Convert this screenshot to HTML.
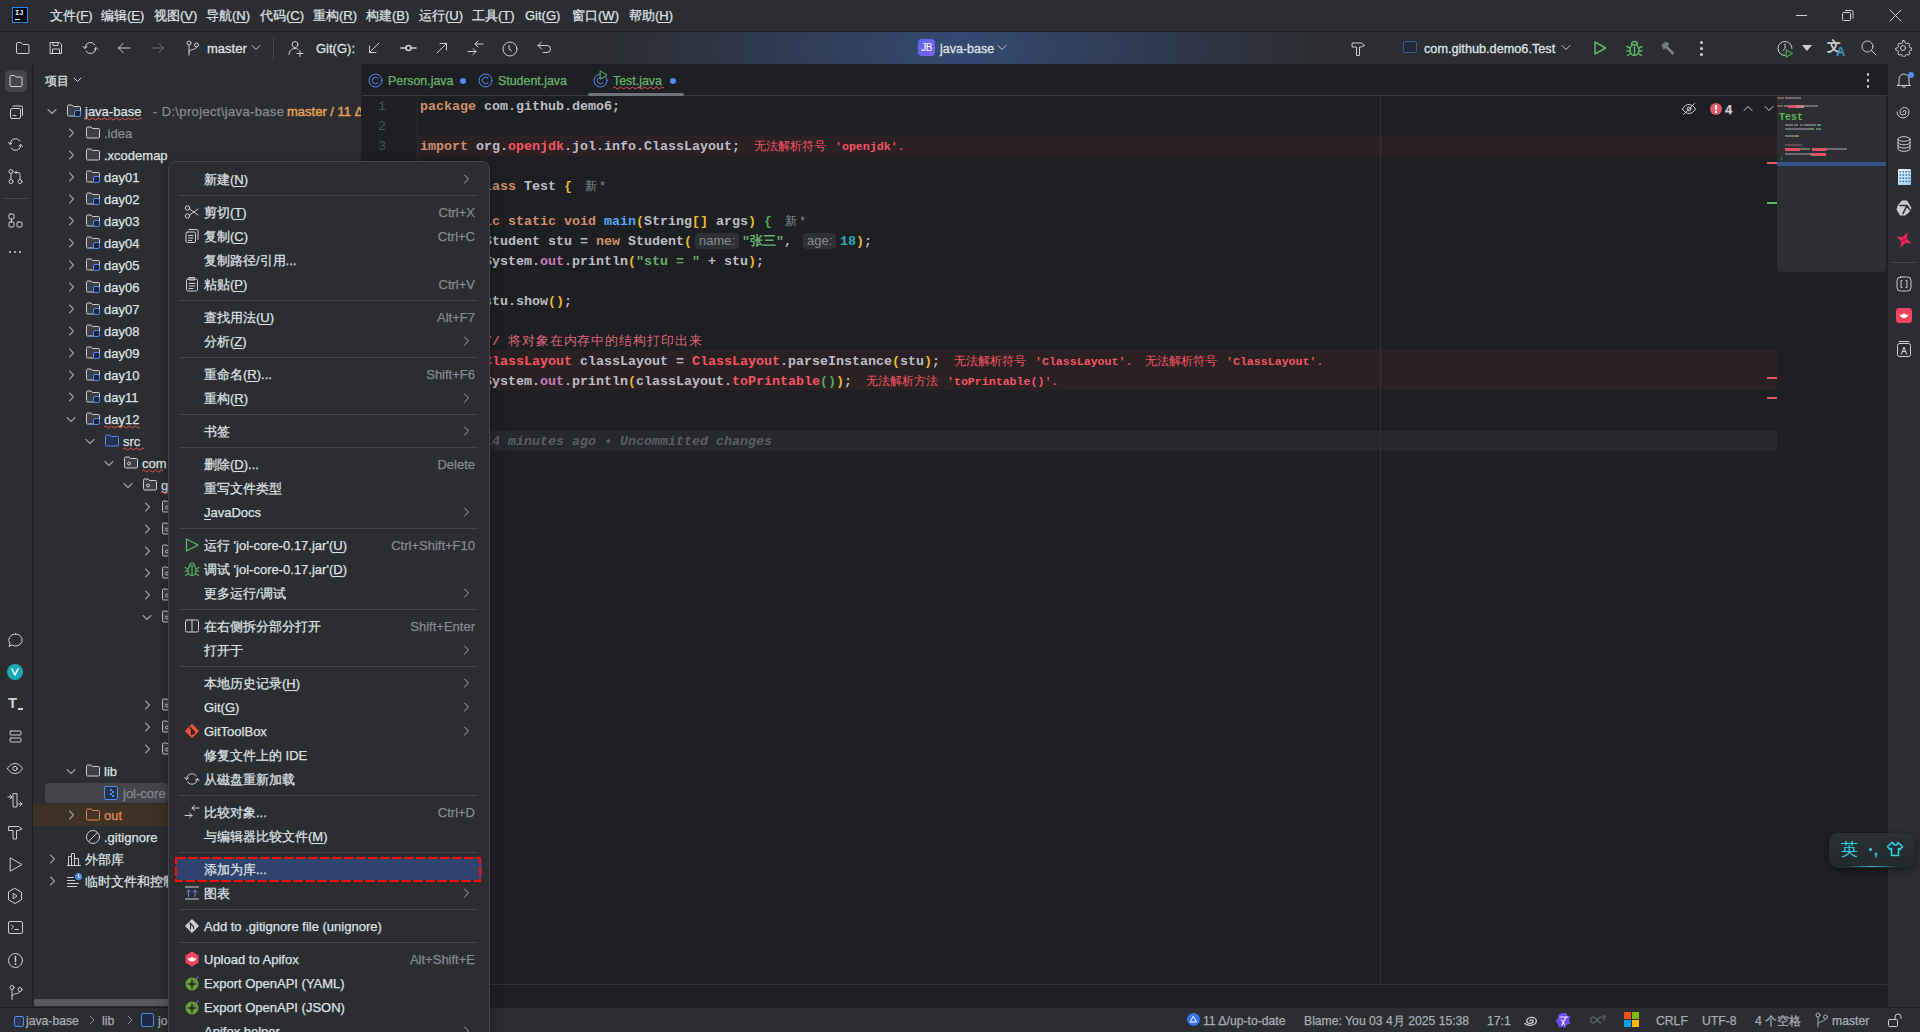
<!DOCTYPE html><html><head><meta charset="utf-8"><style>
html,body{margin:0;padding:0;width:1920px;height:1032px;overflow:hidden;background:#1E1F22}
body{position:relative;font-family:"Liberation Sans",sans-serif;font-size:13px;color:#DFE1E5}
.t{position:absolute;height:20px;line-height:20px;white-space:nowrap;-webkit-text-stroke:.25px}
.m{position:absolute;height:20px;line-height:20px;white-space:pre;font-family:"Liberation Mono",monospace;font-size:13.33px;font-weight:bold}
u{text-decoration:none;border-bottom:1px solid currentColor;line-height:13px;display:inline-block}
</style></head><body>
<div style="position:absolute;left:0px;top:0px;width:1920px;height:31px;background:#2B2D30"></div>
<div style="position:absolute;left:0px;top:31px;width:1920px;height:1px;background:#1E1F22"></div>
<div style="position:absolute;left:0px;top:32px;width:1920px;height:32px;background:#2B2D30"></div>
<div style="position:absolute;left:620px;top:32px;width:720px;height:32px;background:radial-gradient(ellipse 360px 120px at 340px 16px, rgba(56,84,140,0.75), rgba(56,84,140,0) 100%)"></div>
<div style="position:absolute;left:0px;top:64px;width:32px;height:944px;background:#2B2D30"></div>
<div style="position:absolute;left:32px;top:64px;width:1px;height:944px;background:#1E1F22"></div>
<div style="position:absolute;left:33px;top:64px;width:328px;height:944px;background:#2B2D30"></div>
<div style="position:absolute;left:361px;top:64px;width:1px;height:944px;background:#1E1F22"></div>
<div style="position:absolute;left:362px;top:64px;width:1525px;height:944px;background:#1E1F22"></div>
<div style="position:absolute;left:1887px;top:64px;width:1px;height:944px;background:#1E1F22"></div>
<div style="position:absolute;left:1888px;top:64px;width:32px;height:944px;background:#2B2D30"></div>
<div style="position:absolute;left:0px;top:1008px;width:1920px;height:24px;background:#2B2D30"></div>
<div style="position:absolute;left:0px;top:1007px;width:1920px;height:1px;background:#1E1F22"></div>
<div style="position:absolute;left:12px;top:7px;width:16px;height:16px;background:#000;border:1px solid #1F8BFF;box-sizing:border-box"></div>
<div style="position:absolute;left:15px;top:9px;font:bold 7px 'Liberation Mono',monospace;color:#fff;line-height:8px">IJ</div>
<div style="position:absolute;left:15px;top:19px;width:5px;height:1px;background:#fff"></div>
<div class="t" style="left:50px;top:6px;">文件(<u>F</u>)</div>
<div class="t" style="left:101px;top:6px;">编辑(<u>E</u>)</div>
<div class="t" style="left:154px;top:6px;">视图(<u>V</u>)</div>
<div class="t" style="left:206px;top:6px;">导航(<u>N</u>)</div>
<div class="t" style="left:260px;top:6px;">代码(<u>C</u>)</div>
<div class="t" style="left:313px;top:6px;">重构(<u>R</u>)</div>
<div class="t" style="left:366px;top:6px;">构建(<u>B</u>)</div>
<div class="t" style="left:419px;top:6px;">运行(<u>U</u>)</div>
<div class="t" style="left:472px;top:6px;">工具(<u>T</u>)</div>
<div class="t" style="left:525px;top:6px;">Git(<u>G</u>)</div>
<div class="t" style="left:572px;top:6px;">窗口(<u>W</u>)</div>
<div class="t" style="left:629px;top:6px;">帮助(<u>H</u>)</div>
<div style="position:absolute;left:1796px;top:15px;width:11px;height:1px;background:#CED0D6"></div>
<svg style="position:absolute;left:1842px;top:9px;" width="12" height="12" viewBox="0 0 12 12" fill="none" stroke="#CED0D6" stroke-width="1" stroke-linecap="round" stroke-linejoin="round"><rect x="0.5" y="3.5" width="8" height="8" rx="1"/><path d="M3.5 1.5 h6 a1.5 1.5 0 0 1 1.5 1.5 v6"/></svg>
<svg style="position:absolute;left:1889px;top:9px;" width="13" height="13" viewBox="0 0 13 13" fill="none" stroke="#CED0D6" stroke-width="1" stroke-linecap="round" stroke-linejoin="round"><path d="M1 1 L12 12 M12 1 L1 12"/></svg>
<div class="t" style="left:45px;top:71px;font-size:12px">项目</div>
<svg style="position:absolute;left:73px;top:76px;" width="9" height="8" viewBox="0 0 9 8" fill="none" stroke="#CED0D6" stroke-width="1" stroke-linecap="round" stroke-linejoin="round"><path d="M1 2 L4.5 5.5 L8 2"/></svg>
<svg style="position:absolute;left:15px;top:41px;" width="15" height="14" viewBox="0 0 15 14" fill="none" stroke="#CED0D6" stroke-width="1" stroke-linecap="round" stroke-linejoin="round"><path d="M1.5 2.5 a1 1 0 0 1 1-1 h3.5 l2 2 h5 a1 1 0 0 1 1 1 v7 a1 1 0 0 1 -1 1 h-10.5 a1 1 0 0 1 -1-1 z"/></svg>
<svg style="position:absolute;left:49px;top:41px;" width="14" height="14" viewBox="0 0 14 14" fill="none" stroke="#CED0D6" stroke-width="1" stroke-linecap="round" stroke-linejoin="round"><path d="M1.5 1.5 h9 l2 2 v9 h-11 z"/><path d="M4 1.5 v3 h5 v-3"/><path d="M3.5 12.5 v-4.5 h7 v4.5"/></svg>
<svg style="position:absolute;left:82px;top:40px;" width="17" height="16" viewBox="0 0 17 16" fill="none" stroke="#CED0D6" stroke-width="1" stroke-linecap="round" stroke-linejoin="round"><path d="M3 8 a5.5 5.5 0 0 1 10 -3.2"/><path d="M14 8 a5.5 5.5 0 0 1 -10 3.2"/><path d="M1 6.5 l2 2 l2 -2"/><path d="M12 9.5 l2 -2 l2 2"/></svg>
<svg style="position:absolute;left:117px;top:42px;" width="14" height="12" viewBox="0 0 14 12" fill="none" stroke="#CED0D6" stroke-width="1" stroke-linecap="round" stroke-linejoin="round"><path d="M13 6 h-11.5 M6 1.5 l-4.5 4.5 l4.5 4.5"/></svg>
<svg style="position:absolute;left:151px;top:42px;opacity:.45" width="14" height="12" viewBox="0 0 14 12" fill="none" stroke="#CED0D6" stroke-width="1" stroke-linecap="round" stroke-linejoin="round"><path d="M1 6 h11.5 M8 1.5 l4.5 4.5 l-4.5 4.5"/></svg>
<svg style="position:absolute;left:186px;top:40px;" width="13" height="16" viewBox="0 0 13 16" fill="none" stroke="#CED0D6" stroke-width="1" stroke-linecap="round" stroke-linejoin="round"><circle cx="3" cy="3" r="2"/><circle cx="10.5" cy="5" r="2"/><path d="M3 5 v10 M3 12 c0-3 7.5-2 7.5-5"/></svg>
<div class="t" style="left:207px;top:39px;-webkit-text-stroke:.3px">master</div>
<svg style="position:absolute;left:251px;top:44px;" width="10" height="7" viewBox="0 0 10 7" fill="none" stroke="#CED0D6" stroke-width="1" stroke-linecap="round" stroke-linejoin="round"><path d="M1 1.5 L5 5.5 L9 1.5"/></svg>
<div style="position:absolute;left:273px;top:37px;width:1px;height:23px;background:#43454A"></div>
<svg style="position:absolute;left:287px;top:40px;" width="17" height="17" viewBox="0 0 17 17" fill="none" stroke="#CED0D6" stroke-width="1" stroke-linecap="round" stroke-linejoin="round"><circle cx="8" cy="4.5" r="3"/><path d="M2 14.5 c0-4 3-6 6-6 c1 0 2 .2 3 .8"/><path d="M13 10.5 v6 M10 13.5 h6"/></svg>
<div class="t" style="left:316px;top:39px;-webkit-text-stroke:.3px">Git(G):</div>
<svg style="position:absolute;left:368px;top:42px;" width="12" height="12" viewBox="0 0 12 12" fill="none" stroke="#CED0D6" stroke-width="1" stroke-linecap="round" stroke-linejoin="round"><path d="M11 1 L1.5 10.5 M1.5 4 v6.5 h6.5"/></svg>
<svg style="position:absolute;left:400px;top:42px;stroke-width:1.6" width="17" height="12" viewBox="0 0 17 12" fill="none" stroke="#CED0D6" stroke-width="1" stroke-linecap="round" stroke-linejoin="round"><circle cx="8.5" cy="6" r="2.5"/><path d="M1 6 h5 M11 6 h5"/></svg>
<svg style="position:absolute;left:436px;top:42px;" width="12" height="12" viewBox="0 0 12 12" fill="none" stroke="#CED0D6" stroke-width="1" stroke-linecap="round" stroke-linejoin="round"><path d="M1 11 L10.5 1.5 M4 1.5 h6.5 v6.5"/></svg>
<svg style="position:absolute;left:467px;top:40px;" width="17" height="16" viewBox="0 0 17 16" fill="none" stroke="#CED0D6" stroke-width="1" stroke-linecap="round" stroke-linejoin="round"><path d="M16 4 h-8 M11 1 l-3 3 l3 3"/><path d="M1 11.5 h8 M6 8.5 l3 3 l-3 3"/></svg>
<svg style="position:absolute;left:502px;top:41px;" width="16" height="16" viewBox="0 0 16 16" fill="none" stroke="#CED0D6" stroke-width="1" stroke-linecap="round" stroke-linejoin="round"><circle cx="8" cy="8" r="7"/><path d="M7 4.5 v3.5 l2.5 2"/></svg>
<svg style="position:absolute;left:537px;top:41px;" width="15" height="14" viewBox="0 0 15 14" fill="none" stroke="#CED0D6" stroke-width="1" stroke-linecap="round" stroke-linejoin="round"><path d="M4.5 1 l-3.5 3.5 l3.5 3.5"/><path d="M1 4.5 h9 a3.5 3.5 0 0 1 0 7 h-4"/></svg>
<div style="position:absolute;left:918px;top:39px;width:17px;height:17px;border-radius:4px;background:linear-gradient(135deg,#5B6EF0,#7B5CE8);color:#fff;font:10px 'Liberation Sans',sans-serif;line-height:17px;text-align:center;letter-spacing:-.5px">JB</div>
<div class="t" style="left:940px;top:39px;-webkit-text-stroke:.3px;font-size:12.5px">java-base</div>
<svg style="position:absolute;left:997px;top:44px;" width="10" height="7" viewBox="0 0 10 7" fill="none" stroke="#CED0D6" stroke-width="1" stroke-linecap="round" stroke-linejoin="round"><path d="M1 1.5 L5 5.5 L9 1.5"/></svg>
<svg style="position:absolute;left:1351px;top:41px;" width="15" height="15" viewBox="0 0 15 15" fill="none" stroke="#CED0D6" stroke-width="1" stroke-linecap="round" stroke-linejoin="round"><path d="M1.5 2 h9 l3 2.5 l-3 1.5 h-2 v8.5 h-3 v-8.5 h-4 z"/></svg>
<div style="position:absolute;left:1403px;top:41px;width:14px;height:12px;border:1px solid #3D5A8E;border-radius:2px;box-sizing:border-box;background:#22283A"></div>
<div class="t" style="left:1424px;top:39px;-webkit-text-stroke:.3px;font-size:12.7px">com.github.demo6.Test</div>
<svg style="position:absolute;left:1561px;top:44px;" width="10" height="7" viewBox="0 0 10 7" fill="none" stroke="#CED0D6" stroke-width="1" stroke-linecap="round" stroke-linejoin="round"><path d="M1 1.5 L5 5.5 L9 1.5"/></svg>
<svg style="position:absolute;left:1593px;top:40px;stroke:#5FB865;stroke-width:1.5" width="14" height="16" viewBox="0 0 14 16" fill="none" stroke="#CED0D6" stroke-width="1" stroke-linecap="round" stroke-linejoin="round"><path d="M2 2 L12.5 8 L2 14 Z"/></svg>
<svg style="position:absolute;left:1626px;top:40px;stroke:#5FB865;stroke-width:1.4" width="17" height="17" viewBox="0 0 17 17" fill="none" stroke="#CED0D6" stroke-width="1" stroke-linecap="round" stroke-linejoin="round"><ellipse cx="8.5" cy="10" rx="4.5" ry="5.5"/><path d="M5.5 4.5 a3 3 0 0 1 6 0"/><path d="M1 6.5 l3 1.5 M16 6.5 l-3 1.5 M1 11 h3 M13 11 h3 M1.5 15.5 l3-2 M15.5 15.5 l-3-2 M8.5 6 v9"/></svg>
<svg style="position:absolute;left:1660px;top:40px;stroke:#777A80;fill:#777A80" width="16" height="16" viewBox="0 0 16 16" fill="none" stroke="#CED0D6" stroke-width="1" stroke-linecap="round" stroke-linejoin="round"><path d="M2 5 l4-3 l3 2 l-2 2 l7 7 l-1.5 1.5 l-7-7 l-1.5 1.5 z"/></svg>
<div style="position:absolute;left:1700px;top:41px;width:3px;height:3px;background:#CED0D6;border-radius:2px"></div>
<div style="position:absolute;left:1700px;top:47px;width:3px;height:3px;background:#CED0D6;border-radius:2px"></div>
<div style="position:absolute;left:1700px;top:53px;width:3px;height:3px;background:#CED0D6;border-radius:2px"></div>
<svg style="position:absolute;left:1776px;top:40px;" width="18" height="18" viewBox="0 0 18 18" fill="none" stroke="#CED0D6" stroke-width="1" stroke-linecap="round" stroke-linejoin="round"><path d="M9 15.5 a7 7 0 1 1 7 -7"/><path d="M9 4 v4.5 l-2 2"/><path d="M10.5 10 l6 3.5 l-6 3.5 z" stroke="#5FB865" fill="#1f3a24"/></svg>
<svg style="position:absolute;left:1802px;top:45px;" width="10" height="6" viewBox="0 0 10 6" fill="none" stroke="#CED0D6" stroke-width="1" stroke-linecap="round" stroke-linejoin="round"><path d="M0 0 h10 l-5 6 z" fill="#CED0D6" stroke="none"/></svg>
<div style="position:absolute;left:1827px;top:38px;font:bold 14px 'Liberation Sans',sans-serif;color:#CED0D6;line-height:16px">文</div>
<div style="position:absolute;left:1836px;top:44px;font:bold 13px 'Liberation Sans',sans-serif;color:#3592C4;line-height:16px">A</div>
<svg style="position:absolute;left:1861px;top:40px;" width="16" height="16" viewBox="0 0 16 16" fill="none" stroke="#CED0D6" stroke-width="1" stroke-linecap="round" stroke-linejoin="round"><circle cx="6.5" cy="6.5" r="5.5"/><path d="M10.5 10.5 L15 15"/></svg>
<svg style="position:absolute;left:1894px;top:39px;" width="18" height="18" viewBox="0 0 18 18" fill="none" stroke="#CED0D6" stroke-width="1" stroke-linecap="round" stroke-linejoin="round"><path d="M9 1.5 l1.6 .3 .5 2 1.5.9 2-.6 1.1 1.2 -.6 2 .9 1.5 2 .5 v1.6 l-2 .5 -.9 1.5 .6 2 -1.1 1.2 -2-.6 -1.5.9 -.5 2 h-1.6 l-.5-2 -1.5-.9 -2 .6 -1.1-1.2 .6-2 -.9-1.5 -2-.5 v-1.6 l2-.5 .9-1.5 -.6-2 1.1-1.2 2 .6 1.5-.9 .5-2 z"/><circle cx="9" cy="9" r="2.5"/></svg>
<div style="position:absolute;left:5px;top:70px;width:22px;height:22px;background:#43454A;border-radius:5px"></div>
<svg style="position:absolute;left:8px;top:73px;" width="16" height="16" viewBox="0 0 16 16" fill="none" stroke="#CED0D6" stroke-width="1" stroke-linecap="round" stroke-linejoin="round"><path d="M2 3.5 a1 1 0 0 1 1-1 h3.5 l1.5 1.5 h5 a1 1 0 0 1 1 1 v7.5 a1 1 0 0 1 -1 1 h-10 a1 1 0 0 1 -1-1 z"/></svg>
<svg style="position:absolute;left:8px;top:104px;" width="16" height="16" viewBox="0 0 16 16" fill="none" stroke="#CED0D6" stroke-width="1" stroke-linecap="round" stroke-linejoin="round"><rect x="2.5" y="4.5" width="10" height="10" rx="1.5"/><path d="M5 2 h8 a1.5 1.5 0 0 1 1.5 1.5 v8"/><path d="M5 11.5 h3"/></svg>
<svg style="position:absolute;left:7px;top:136px;" width="17" height="17" viewBox="0 0 17 17" fill="none" stroke="#CED0D6" stroke-width="1" stroke-linecap="round" stroke-linejoin="round"><path d="M3 8 a5.5 5.5 0 0 1 10 -3"/><path d="M14 9 a5.5 5.5 0 0 1 -10 3"/><path d="M1.5 6.5 l1.5 2 l2 -1.5"/><path d="M15.5 10.5 l-1.5-2 l-2 1.5"/></svg>
<svg style="position:absolute;left:7px;top:168px;" width="17" height="17" viewBox="0 0 17 17" fill="none" stroke="#CED0D6" stroke-width="1" stroke-linecap="round" stroke-linejoin="round"><circle cx="4" cy="3.5" r="2"/><circle cx="13" cy="13.5" r="2"/><circle cx="4" cy="13.5" r="2"/><path d="M4 5.5 v6 M13 11.5 v-5 a2 2 0 0 0 -2-2 h-3 M9.5 3 l-1.5 1.5 l1.5 1.5"/></svg>
<div style="position:absolute;left:4px;top:198px;width:24px;height:1px;background:#43454A"></div>
<svg style="position:absolute;left:7px;top:212px;" width="17" height="17" viewBox="0 0 17 17" fill="none" stroke="#CED0D6" stroke-width="1" stroke-linecap="round" stroke-linejoin="round"><rect x="2" y="2" width="5" height="5" rx="1"/><rect x="2" y="10" width="5" height="5" rx="1"/><rect x="10" y="10" width="5" height="5" rx="1"/><path d="M4.5 7 v3"/></svg>
<div style="position:absolute;left:9px;top:251px;width:2px;height:2px;background:#CED0D6;border-radius:1px"></div>
<div style="position:absolute;left:14px;top:251px;width:2px;height:2px;background:#CED0D6;border-radius:1px"></div>
<div style="position:absolute;left:19px;top:251px;width:2px;height:2px;background:#CED0D6;border-radius:1px"></div>
<svg style="position:absolute;left:7px;top:632px;" width="17" height="17" viewBox="0 0 17 17" fill="none" stroke="#CED0D6" stroke-width="1" stroke-linecap="round" stroke-linejoin="round"><path d="M8.5 2 a6.5 6 0 1 1 -3.5 11 l-3 1.5 l1-3 a6.5 6 0 0 1 5.5 -9.5 z"/></svg>
<div style="position:absolute;left:7px;top:664px;width:16px;height:16px;border-radius:8px;background:#1BA9B8"></div>
<svg style="position:absolute;left:7px;top:664px;" width="16" height="16" viewBox="0 0 16 16" fill="none" stroke="#CED0D6" stroke-width="1" stroke-linecap="round" stroke-linejoin="round"><path d="M5 5 l3 6 l3-6" stroke="#fff" stroke-width="1.5"/></svg>
<div style="position:absolute;left:8px;top:695px;font:bold 15px 'Liberation Sans',sans-serif;color:#CED0D6;line-height:16px">T</div>
<div style="position:absolute;left:18px;top:708px;width:5px;height:2px;background:#CED0D6"></div>
<svg style="position:absolute;left:7px;top:728px;" width="17" height="17" viewBox="0 0 17 17" fill="none" stroke="#CED0D6" stroke-width="1" stroke-linecap="round" stroke-linejoin="round"><rect x="3" y="3" width="11" height="4" rx="1"/><rect x="3" y="10" width="11" height="4" rx="1"/></svg>
<svg style="position:absolute;left:6px;top:760px;" width="18" height="17" viewBox="0 0 18 17" fill="none" stroke="#CED0D6" stroke-width="1" stroke-linecap="round" stroke-linejoin="round"><path d="M1.5 8.5 c2-3.5 4.5-5 7.5-5 s5.5 1.5 7.5 5 c-2 3.5-4.5 5-7.5 5 s-5.5-1.5-7.5-5 z"/><circle cx="9" cy="8.5" r="2.2"/></svg>
<svg style="position:absolute;left:7px;top:792px;" width="17" height="17" viewBox="0 0 17 17" fill="none" stroke="#CED0D6" stroke-width="1" stroke-linecap="round" stroke-linejoin="round"><path d="M6 2 v13 h4 v-13 z"/><path d="M1 5 h4 M3 3 l2 2 l-2 2 M11 12 h4 M13 10 l2 2 l-2 2"/></svg>
<svg style="position:absolute;left:7px;top:824px;" width="17" height="17" viewBox="0 0 17 17" fill="none" stroke="#CED0D6" stroke-width="1" stroke-linecap="round" stroke-linejoin="round"><path d="M2 2.5 h9.5 l3.5 2.5 l-3.5 1.5 h-2 v8.5 h-3.5 v-8.5 h-4 z"/></svg>
<svg style="position:absolute;left:8px;top:856px;" width="16" height="17" viewBox="0 0 16 17" fill="none" stroke="#CED0D6" stroke-width="1" stroke-linecap="round" stroke-linejoin="round"><path d="M2.5 2 L14 8.5 L2.5 15 Z"/></svg>
<svg style="position:absolute;left:6px;top:887px;" width="18" height="18" viewBox="0 0 18 18" fill="none" stroke="#CED0D6" stroke-width="1" stroke-linecap="round" stroke-linejoin="round"><path d="M9 1.5 l6.5 3.75 v7.5 L9 16.5 l-6.5-3.75 v-7.5 z"/><path d="M7.5 6.5 l3.5 2.5 l-3.5 2.5 z"/></svg>
<svg style="position:absolute;left:7px;top:920px;" width="17" height="16" viewBox="0 0 17 16" fill="none" stroke="#CED0D6" stroke-width="1" stroke-linecap="round" stroke-linejoin="round"><rect x="1.5" y="1.5" width="14" height="12" rx="1.5"/><path d="M4.5 5 l2 2 l-2 2 M8 9.5 h3.5"/></svg>
<svg style="position:absolute;left:7px;top:952px;" width="17" height="17" viewBox="0 0 17 17" fill="none" stroke="#CED0D6" stroke-width="1" stroke-linecap="round" stroke-linejoin="round"><circle cx="8.5" cy="8.5" r="7"/><path d="M8.5 4.5 v5" stroke-width="1.5"/><circle cx="8.5" cy="12" r=".4" stroke-width="1.2"/></svg>
<svg style="position:absolute;left:8px;top:984px;" width="16" height="17" viewBox="0 0 16 17" fill="none" stroke="#CED0D6" stroke-width="1" stroke-linecap="round" stroke-linejoin="round"><circle cx="4" cy="3.5" r="2"/><circle cx="12" cy="5.5" r="2"/><path d="M4 5.5 v10 M4 12 c0-3 8-1.5 8-4.5"/></svg>
<svg style="position:absolute;left:1895px;top:71px;" width="18" height="18" viewBox="0 0 18 18" fill="none" stroke="#CED0D6" stroke-width="1" stroke-linecap="round" stroke-linejoin="round"><path d="M4 13 v-5 a5 5 0 0 1 10 0 v5 l1.5 1.5 h-13 z"/><path d="M7.5 16 h3"/></svg>
<div style="position:absolute;left:1908px;top:72px;width:6px;height:6px;border-radius:3px;background:#548AF7"></div>
<svg style="position:absolute;left:1895px;top:103px;" width="18" height="18" viewBox="0 0 18 18" fill="none" stroke="#CED0D6" stroke-width="1" stroke-linecap="round" stroke-linejoin="round"><path d="M9 9 m-1 0 a1.5 1.5 0 0 1 3 0 a3 3 0 0 1 -6 0 a4.5 4.5 0 0 1 9 0 a6 6 0 0 1 -12 0"/></svg>
<svg style="position:absolute;left:1895px;top:135px;" width="18" height="18" viewBox="0 0 18 18" fill="none" stroke="#CED0D6" stroke-width="1" stroke-linecap="round" stroke-linejoin="round"><ellipse cx="9" cy="4" rx="6" ry="2.3"/><path d="M3 4 v10 a6 2.3 0 0 0 12 0 v-10 M3 7.5 a6 2.3 0 0 0 12 0 M3 10.8 a6 2.3 0 0 0 12 0"/></svg>
<div style="position:absolute;left:1898px;top:169px;width:13px;height:16px;background:linear-gradient(135deg,#F2F8FD,#9FCDEE);border-radius:1px"></div>
<svg style="position:absolute;left:1898px;top:169px" width="13" height="16"><g fill="#3A78B5"><rect x="1.5" y="2.0" width="1.6" height="1.6"/><rect x="4.5" y="2.0" width="1.6" height="1.6"/><rect x="7.5" y="2.0" width="1.6" height="1.6"/><rect x="10.5" y="2.0" width="1.6" height="1.6"/><rect x="1.5" y="5.2" width="1.6" height="1.6"/><rect x="4.5" y="5.2" width="1.6" height="1.6"/><rect x="7.5" y="5.2" width="1.6" height="1.6"/><rect x="10.5" y="5.2" width="1.6" height="1.6"/><rect x="1.5" y="8.4" width="1.6" height="1.6"/><rect x="4.5" y="8.4" width="1.6" height="1.6"/><rect x="7.5" y="8.4" width="1.6" height="1.6"/><rect x="10.5" y="8.4" width="1.6" height="1.6"/><rect x="1.5" y="11.600000000000001" width="1.6" height="1.6"/><rect x="4.5" y="11.600000000000001" width="1.6" height="1.6"/><rect x="7.5" y="11.600000000000001" width="1.6" height="1.6"/><rect x="10.5" y="11.600000000000001" width="1.6" height="1.6"/></g></svg>
<svg style="position:absolute;left:1895px;top:199px;" width="18" height="18" viewBox="0 0 18 18" fill="none" stroke="#CED0D6" stroke-width="1" stroke-linecap="round" stroke-linejoin="round"><path d="M7 1.5 h5 l4.5 7.5 l-2.5 4.5 l-4 3 h-5 l-3.5-6 l1.5-4.5 z" fill="#C9CBD0" stroke="none"/><path d="M5 6.5 h7 l-4 8 M12 6.5 l2.5 4" stroke="#2B2D30" stroke-width="1.6"/></svg>
<svg style="position:absolute;left:1895px;top:231px;" width="18" height="18" viewBox="0 0 18 18" fill="none" stroke="#CED0D6" stroke-width="1" stroke-linecap="round" stroke-linejoin="round"><path d="M9 0.5 L11.2 6.8 L17.5 9 L11.2 11.2 L9 17.5 L6.8 11.2 L0.5 9 L6.8 6.8 Z" fill="#E8265E" stroke="none" transform="rotate(25 9 9)"/><path d="M6 6 L12 12 M12 6 L6 12" stroke="#9E1640" stroke-width=".8" transform="rotate(25 9 9)"/></svg>
<div style="position:absolute;left:1892px;top:262px;width:24px;height:1px;background:#43454A"></div>
<svg style="position:absolute;left:1895px;top:275px;" width="18" height="18" viewBox="0 0 18 18" fill="none" stroke="#CED0D6" stroke-width="1" stroke-linecap="round" stroke-linejoin="round"><rect x="2" y="2" width="14" height="14" rx="3.5"/><path d="M7 5.5 h-1 v7 h1 M11 5.5 h1 v7 h-1"/></svg>
<div style="position:absolute;left:1896px;top:308px;width:16px;height:15px;border-radius:3px;background:#F0455E"></div>
<svg style="position:absolute;left:1896px;top:308px;" width="16" height="15" viewBox="0 0 16 15" fill="none" stroke="#CED0D6" stroke-width="1" stroke-linecap="round" stroke-linejoin="round"><path d="M4 6 a4 4 0 0 0 8 0 l-1.5 1 l-2.5-2 l-2.5 2 z" fill="#fff" stroke="none"/></svg>
<svg style="position:absolute;left:1895px;top:340px;" width="18" height="18" viewBox="0 0 18 18" fill="none" stroke="#CED0D6" stroke-width="1" stroke-linecap="round" stroke-linejoin="round"><rect x="2.5" y="3.5" width="13" height="13" rx="2"/><path d="M4 1.5 h10"/><path d="M6.5 14 l2.5-7 l2.5 7 M7.5 11.5 h3"/></svg>
<div style="position:absolute;left:14px;top:1016px;width:8px;height:9px;border:1px solid #548AF7;border-radius:2px;background:#2A3550"></div>
<div class="t" style="left:26px;top:1011px;color:#A8ADB5;font-size:12.2px">java-base</div>
<svg style="position:absolute;left:89px;top:1015px;stroke:#8B8E94" width="6" height="10" viewBox="0 0 6 10" fill="none" stroke="#CED0D6" stroke-width="1" stroke-linecap="round" stroke-linejoin="round"><path d="M1 1 l4 4 l-4 4"/></svg>
<div class="t" style="left:102px;top:1011px;color:#A8ADB5;font-size:12.2px">lib</div>
<svg style="position:absolute;left:127px;top:1015px;stroke:#8B8E94" width="6" height="10" viewBox="0 0 6 10" fill="none" stroke="#CED0D6" stroke-width="1" stroke-linecap="round" stroke-linejoin="round"><path d="M1 1 l4 4 l-4 4"/></svg>
<div style="position:absolute;left:141px;top:1013px;width:11px;height:12px;border:1px solid #548AF7;border-radius:2px;background:#1E2A44"></div>
<div class="t" style="left:158px;top:1011px;color:#A8ADB5;font-size:12.2px">jo</div>
<div style="position:absolute;left:1187px;top:1013px;width:13px;height:13px;border-radius:7px;background:#3574F0"></div>
<svg style="position:absolute;left:1187px;top:1013px;" width="13" height="13" viewBox="0 0 13 13" fill="none" stroke="#CED0D6" stroke-width="1" stroke-linecap="round" stroke-linejoin="round"><path d="M6.5 3.5 l3 5.5 h-6 z" stroke="#fff"/></svg>
<div class="t" style="left:1203px;top:1011px;color:#A8ADB5;font-size:12.2px">11 Δ/up-to-date</div>
<div class="t" style="left:1304px;top:1011px;color:#A8ADB5;font-size:12.2px">Blame: You 03 4月 2025 15:38</div>
<div class="t" style="left:1487px;top:1011px;color:#A8ADB5;font-size:12.2px">17:1</div>
<svg style="position:absolute;left:1523px;top:1014px;stroke-width:1.3" width="16" height="14" viewBox="0 0 16 14" fill="none" stroke="#CED0D6" stroke-width="1" stroke-linecap="round" stroke-linejoin="round"><path d="M8 7 m-1 0 a1.6 1.2 0 0 1 3.2 0 a3.2 2.4 0 0 1 -6.4 0 a4.8 3.6 0 0 1 9.6 0 a6.4 4.8 0 0 1 -11.5 2.5"/></svg>
<svg style="position:absolute;left:1555px;top:1012px;" width="17" height="17" viewBox="0 0 17 17" fill="none" stroke="#CED0D6" stroke-width="1" stroke-linecap="round" stroke-linejoin="round"><path d="M7 1 h4 l1.5 3 h3 l-1.5 4 l1.5 4 l-3.5 .5 l-2 3.5 l-3-1 l-3.5 .5 l-.5-3.5 l-2.5-3 l2.5-3 l.5-3.5 z" fill="#6C4DF0" stroke="none"/><path d="M5 5 h7.5 M11 5 l-4 8 M6.5 8 l3 4.5" stroke="#F0ECFF" stroke-width="1.2"/></svg>
<svg style="position:absolute;left:1589px;top:1014px;stroke:#5A5D63;stroke-width:1.4" width="18" height="12" viewBox="0 0 18 12" fill="none" stroke="#CED0D6" stroke-width="1" stroke-linecap="round" stroke-linejoin="round"><path d="M4.5 3 a3 3 0 1 0 0 6 c2.5 0 4.5-6 7.5-6 a3 3 0 0 1 3 3 M4.5 3 c2.5 0 4.5 6 7.5 6"/><circle cx="15.5" cy="2.5" r=".8"/></svg>
<svg style="position:absolute;left:1624px;top:1012px" width="15" height="15"><rect x="0" y="0" width="7" height="7" fill="#F25022"/><rect x="8" y="0" width="7" height="7" fill="#7FBA00"/><rect x="0" y="8" width="7" height="7" fill="#00A4EF"/><rect x="8" y="8" width="7" height="7" fill="#FFB900"/></svg>
<div class="t" style="left:1656px;top:1011px;color:#A8ADB5;font-size:12.2px">CRLF</div>
<div class="t" style="left:1702px;top:1011px;color:#A8ADB5;font-size:12.2px">UTF-8</div>
<div class="t" style="left:1755px;top:1011px;color:#A8ADB5;font-size:12.2px">4 个空格</div>
<svg style="position:absolute;left:1815px;top:1012px;stroke:#A8ADB5" width="13" height="16" viewBox="0 0 13 16" fill="none" stroke="#CED0D6" stroke-width="1" stroke-linecap="round" stroke-linejoin="round"><circle cx="3" cy="3" r="2"/><circle cx="10.5" cy="5" r="2"/><path d="M3 5 v10 M3 12 c0-3 7.5-2 7.5-5"/></svg>
<div class="t" style="left:1832px;top:1011px;color:#A8ADB5;font-size:12.2px">master</div>
<svg style="position:absolute;left:1887px;top:1012px;" width="16" height="16" viewBox="0 0 16 16" fill="none" stroke="#CED0D6" stroke-width="1" stroke-linecap="round" stroke-linejoin="round"><rect x="1.5" y="7.5" width="9" height="7" rx="1"/><path d="M8 7.5 v-2.5 a3 3 0 0 1 6 0 v1.5"/></svg>
<svg style="position:absolute;left:47px;top:108px;stroke:#9A9DA3;stroke-width:1.15" width="10" height="7" viewBox="0 0 10 7" fill="none" stroke="#CED0D6" stroke-width="1" stroke-linecap="round" stroke-linejoin="round"><path d="M1 1.5 L5 5.5 L9 1.5"/></svg>
<svg style="position:absolute;left:66px;top:103px;" width="16" height="16" viewBox="0 0 16 16" fill="none" stroke="#CED0D6" stroke-width="1" stroke-linecap="round" stroke-linejoin="round"><path d="M1.5 3 a1 1 0 0 1 1-1 h3.5 l1.5 1.5 h6 a1 1 0 0 1 1 1 v7.5 a1 1 0 0 1 -1 1 h-11 a1 1 0 0 1 -1-1 z" fill="#3C3E43" stroke="#CED0D6"/></svg>
<div style="position:absolute;left:74px;top:110px;width:7px;height:7px;border:1.3px solid #548AF7;border-radius:2px;background:#1F2536;box-sizing:border-box"></div>
<div class="t" style="left:85px;top:102px;">java-base</div>
<svg style="position:absolute;left:85px;top:117px" width="58" height="4"><path d="M0 2 q1.5 -2 3 0 t3 0 t3 0 t3 0 t3 0 t3 0 t3 0 t3 0 t3 0 t3 0 t3 0 t3 0 t3 0 t3 0 t3 0 t3 0 t3 0 t3 0 t3 0" stroke="#E05555" fill="none" stroke-width="1"/></svg>
<div class="t" style="left:153px;top:102px;color:#868A91;letter-spacing:.35px">- D:\project\java-base</div>
<div class="t" style="left:287px;top:102px;color:#E3A15A;-webkit-text-stroke:.45px;width:74px;overflow:hidden">master / 11 Δ</div>
<div style="position:absolute;left:45px;top:783px;width:123px;height:20px;background:#43454A;border-radius:4px"></div>
<div style="position:absolute;left:33px;top:805px;width:135px;height:21px;background:#3D3223"></div>
<svg style="position:absolute;left:68px;top:128px;stroke:#9A9DA3;stroke-width:1.15" width="7" height="10" viewBox="0 0 7 10" fill="none" stroke="#CED0D6" stroke-width="1" stroke-linecap="round" stroke-linejoin="round"><path d="M1.5 1 L5.5 5 L1.5 9"/></svg>
<svg style="position:absolute;left:85px;top:125px;" width="16" height="16" viewBox="0 0 16 16" fill="none" stroke="#CED0D6" stroke-width="1" stroke-linecap="round" stroke-linejoin="round"><path d="M1.5 3 a1 1 0 0 1 1-1 h3.5 l1.5 1.5 h6 a1 1 0 0 1 1 1 v7.5 a1 1 0 0 1 -1 1 h-11 a1 1 0 0 1 -1-1 z" fill="#3C3E43" stroke="#CED0D6"/></svg>
<div class="t" style="left:104px;top:124px;color:#868A91">.idea</div>
<svg style="position:absolute;left:68px;top:150px;stroke:#9A9DA3;stroke-width:1.15" width="7" height="10" viewBox="0 0 7 10" fill="none" stroke="#CED0D6" stroke-width="1" stroke-linecap="round" stroke-linejoin="round"><path d="M1.5 1 L5.5 5 L1.5 9"/></svg>
<svg style="position:absolute;left:85px;top:147px;" width="16" height="16" viewBox="0 0 16 16" fill="none" stroke="#CED0D6" stroke-width="1" stroke-linecap="round" stroke-linejoin="round"><path d="M1.5 3 a1 1 0 0 1 1-1 h3.5 l1.5 1.5 h6 a1 1 0 0 1 1 1 v7.5 a1 1 0 0 1 -1 1 h-11 a1 1 0 0 1 -1-1 z" fill="#3C3E43" stroke="#CED0D6"/></svg>
<div class="t" style="left:104px;top:146px;color:#DFE1E5">.xcodemap</div>
<svg style="position:absolute;left:68px;top:172px;stroke:#9A9DA3;stroke-width:1.15" width="7" height="10" viewBox="0 0 7 10" fill="none" stroke="#CED0D6" stroke-width="1" stroke-linecap="round" stroke-linejoin="round"><path d="M1.5 1 L5.5 5 L1.5 9"/></svg>
<svg style="position:absolute;left:85px;top:169px;" width="16" height="16" viewBox="0 0 16 16" fill="none" stroke="#CED0D6" stroke-width="1" stroke-linecap="round" stroke-linejoin="round"><path d="M1.5 3 a1 1 0 0 1 1-1 h3.5 l1.5 1.5 h6 a1 1 0 0 1 1 1 v7.5 a1 1 0 0 1 -1 1 h-11 a1 1 0 0 1 -1-1 z" fill="#3C3E43" stroke="#CED0D6"/></svg>
<div style="position:absolute;left:93px;top:176px;width:7px;height:7px;border:1.3px solid #548AF7;border-radius:2px;background:#1F2536;box-sizing:border-box"></div>
<div class="t" style="left:104px;top:168px;color:#DFE1E5">day01</div>
<svg style="position:absolute;left:68px;top:194px;stroke:#9A9DA3;stroke-width:1.15" width="7" height="10" viewBox="0 0 7 10" fill="none" stroke="#CED0D6" stroke-width="1" stroke-linecap="round" stroke-linejoin="round"><path d="M1.5 1 L5.5 5 L1.5 9"/></svg>
<svg style="position:absolute;left:85px;top:191px;" width="16" height="16" viewBox="0 0 16 16" fill="none" stroke="#CED0D6" stroke-width="1" stroke-linecap="round" stroke-linejoin="round"><path d="M1.5 3 a1 1 0 0 1 1-1 h3.5 l1.5 1.5 h6 a1 1 0 0 1 1 1 v7.5 a1 1 0 0 1 -1 1 h-11 a1 1 0 0 1 -1-1 z" fill="#3C3E43" stroke="#CED0D6"/></svg>
<div style="position:absolute;left:93px;top:198px;width:7px;height:7px;border:1.3px solid #548AF7;border-radius:2px;background:#1F2536;box-sizing:border-box"></div>
<div class="t" style="left:104px;top:190px;color:#DFE1E5">day02</div>
<svg style="position:absolute;left:68px;top:216px;stroke:#9A9DA3;stroke-width:1.15" width="7" height="10" viewBox="0 0 7 10" fill="none" stroke="#CED0D6" stroke-width="1" stroke-linecap="round" stroke-linejoin="round"><path d="M1.5 1 L5.5 5 L1.5 9"/></svg>
<svg style="position:absolute;left:85px;top:213px;" width="16" height="16" viewBox="0 0 16 16" fill="none" stroke="#CED0D6" stroke-width="1" stroke-linecap="round" stroke-linejoin="round"><path d="M1.5 3 a1 1 0 0 1 1-1 h3.5 l1.5 1.5 h6 a1 1 0 0 1 1 1 v7.5 a1 1 0 0 1 -1 1 h-11 a1 1 0 0 1 -1-1 z" fill="#3C3E43" stroke="#CED0D6"/></svg>
<div style="position:absolute;left:93px;top:220px;width:7px;height:7px;border:1.3px solid #548AF7;border-radius:2px;background:#1F2536;box-sizing:border-box"></div>
<div class="t" style="left:104px;top:212px;color:#DFE1E5">day03</div>
<svg style="position:absolute;left:68px;top:238px;stroke:#9A9DA3;stroke-width:1.15" width="7" height="10" viewBox="0 0 7 10" fill="none" stroke="#CED0D6" stroke-width="1" stroke-linecap="round" stroke-linejoin="round"><path d="M1.5 1 L5.5 5 L1.5 9"/></svg>
<svg style="position:absolute;left:85px;top:235px;" width="16" height="16" viewBox="0 0 16 16" fill="none" stroke="#CED0D6" stroke-width="1" stroke-linecap="round" stroke-linejoin="round"><path d="M1.5 3 a1 1 0 0 1 1-1 h3.5 l1.5 1.5 h6 a1 1 0 0 1 1 1 v7.5 a1 1 0 0 1 -1 1 h-11 a1 1 0 0 1 -1-1 z" fill="#3C3E43" stroke="#CED0D6"/></svg>
<div style="position:absolute;left:93px;top:242px;width:7px;height:7px;border:1.3px solid #548AF7;border-radius:2px;background:#1F2536;box-sizing:border-box"></div>
<div class="t" style="left:104px;top:234px;color:#DFE1E5">day04</div>
<svg style="position:absolute;left:68px;top:260px;stroke:#9A9DA3;stroke-width:1.15" width="7" height="10" viewBox="0 0 7 10" fill="none" stroke="#CED0D6" stroke-width="1" stroke-linecap="round" stroke-linejoin="round"><path d="M1.5 1 L5.5 5 L1.5 9"/></svg>
<svg style="position:absolute;left:85px;top:257px;" width="16" height="16" viewBox="0 0 16 16" fill="none" stroke="#CED0D6" stroke-width="1" stroke-linecap="round" stroke-linejoin="round"><path d="M1.5 3 a1 1 0 0 1 1-1 h3.5 l1.5 1.5 h6 a1 1 0 0 1 1 1 v7.5 a1 1 0 0 1 -1 1 h-11 a1 1 0 0 1 -1-1 z" fill="#3C3E43" stroke="#CED0D6"/></svg>
<div style="position:absolute;left:93px;top:264px;width:7px;height:7px;border:1.3px solid #548AF7;border-radius:2px;background:#1F2536;box-sizing:border-box"></div>
<div class="t" style="left:104px;top:256px;color:#DFE1E5">day05</div>
<svg style="position:absolute;left:68px;top:282px;stroke:#9A9DA3;stroke-width:1.15" width="7" height="10" viewBox="0 0 7 10" fill="none" stroke="#CED0D6" stroke-width="1" stroke-linecap="round" stroke-linejoin="round"><path d="M1.5 1 L5.5 5 L1.5 9"/></svg>
<svg style="position:absolute;left:85px;top:279px;" width="16" height="16" viewBox="0 0 16 16" fill="none" stroke="#CED0D6" stroke-width="1" stroke-linecap="round" stroke-linejoin="round"><path d="M1.5 3 a1 1 0 0 1 1-1 h3.5 l1.5 1.5 h6 a1 1 0 0 1 1 1 v7.5 a1 1 0 0 1 -1 1 h-11 a1 1 0 0 1 -1-1 z" fill="#3C3E43" stroke="#CED0D6"/></svg>
<div style="position:absolute;left:93px;top:286px;width:7px;height:7px;border:1.3px solid #548AF7;border-radius:2px;background:#1F2536;box-sizing:border-box"></div>
<div class="t" style="left:104px;top:278px;color:#DFE1E5">day06</div>
<svg style="position:absolute;left:68px;top:304px;stroke:#9A9DA3;stroke-width:1.15" width="7" height="10" viewBox="0 0 7 10" fill="none" stroke="#CED0D6" stroke-width="1" stroke-linecap="round" stroke-linejoin="round"><path d="M1.5 1 L5.5 5 L1.5 9"/></svg>
<svg style="position:absolute;left:85px;top:301px;" width="16" height="16" viewBox="0 0 16 16" fill="none" stroke="#CED0D6" stroke-width="1" stroke-linecap="round" stroke-linejoin="round"><path d="M1.5 3 a1 1 0 0 1 1-1 h3.5 l1.5 1.5 h6 a1 1 0 0 1 1 1 v7.5 a1 1 0 0 1 -1 1 h-11 a1 1 0 0 1 -1-1 z" fill="#3C3E43" stroke="#CED0D6"/></svg>
<div style="position:absolute;left:93px;top:308px;width:7px;height:7px;border:1.3px solid #548AF7;border-radius:2px;background:#1F2536;box-sizing:border-box"></div>
<div class="t" style="left:104px;top:300px;color:#DFE1E5">day07</div>
<svg style="position:absolute;left:68px;top:326px;stroke:#9A9DA3;stroke-width:1.15" width="7" height="10" viewBox="0 0 7 10" fill="none" stroke="#CED0D6" stroke-width="1" stroke-linecap="round" stroke-linejoin="round"><path d="M1.5 1 L5.5 5 L1.5 9"/></svg>
<svg style="position:absolute;left:85px;top:323px;" width="16" height="16" viewBox="0 0 16 16" fill="none" stroke="#CED0D6" stroke-width="1" stroke-linecap="round" stroke-linejoin="round"><path d="M1.5 3 a1 1 0 0 1 1-1 h3.5 l1.5 1.5 h6 a1 1 0 0 1 1 1 v7.5 a1 1 0 0 1 -1 1 h-11 a1 1 0 0 1 -1-1 z" fill="#3C3E43" stroke="#CED0D6"/></svg>
<div style="position:absolute;left:93px;top:330px;width:7px;height:7px;border:1.3px solid #548AF7;border-radius:2px;background:#1F2536;box-sizing:border-box"></div>
<div class="t" style="left:104px;top:322px;color:#DFE1E5">day08</div>
<svg style="position:absolute;left:68px;top:348px;stroke:#9A9DA3;stroke-width:1.15" width="7" height="10" viewBox="0 0 7 10" fill="none" stroke="#CED0D6" stroke-width="1" stroke-linecap="round" stroke-linejoin="round"><path d="M1.5 1 L5.5 5 L1.5 9"/></svg>
<svg style="position:absolute;left:85px;top:345px;" width="16" height="16" viewBox="0 0 16 16" fill="none" stroke="#CED0D6" stroke-width="1" stroke-linecap="round" stroke-linejoin="round"><path d="M1.5 3 a1 1 0 0 1 1-1 h3.5 l1.5 1.5 h6 a1 1 0 0 1 1 1 v7.5 a1 1 0 0 1 -1 1 h-11 a1 1 0 0 1 -1-1 z" fill="#3C3E43" stroke="#CED0D6"/></svg>
<div style="position:absolute;left:93px;top:352px;width:7px;height:7px;border:1.3px solid #548AF7;border-radius:2px;background:#1F2536;box-sizing:border-box"></div>
<div class="t" style="left:104px;top:344px;color:#DFE1E5">day09</div>
<svg style="position:absolute;left:68px;top:370px;stroke:#9A9DA3;stroke-width:1.15" width="7" height="10" viewBox="0 0 7 10" fill="none" stroke="#CED0D6" stroke-width="1" stroke-linecap="round" stroke-linejoin="round"><path d="M1.5 1 L5.5 5 L1.5 9"/></svg>
<svg style="position:absolute;left:85px;top:367px;" width="16" height="16" viewBox="0 0 16 16" fill="none" stroke="#CED0D6" stroke-width="1" stroke-linecap="round" stroke-linejoin="round"><path d="M1.5 3 a1 1 0 0 1 1-1 h3.5 l1.5 1.5 h6 a1 1 0 0 1 1 1 v7.5 a1 1 0 0 1 -1 1 h-11 a1 1 0 0 1 -1-1 z" fill="#3C3E43" stroke="#CED0D6"/></svg>
<div style="position:absolute;left:93px;top:374px;width:7px;height:7px;border:1.3px solid #548AF7;border-radius:2px;background:#1F2536;box-sizing:border-box"></div>
<div class="t" style="left:104px;top:366px;color:#DFE1E5">day10</div>
<svg style="position:absolute;left:68px;top:392px;stroke:#9A9DA3;stroke-width:1.15" width="7" height="10" viewBox="0 0 7 10" fill="none" stroke="#CED0D6" stroke-width="1" stroke-linecap="round" stroke-linejoin="round"><path d="M1.5 1 L5.5 5 L1.5 9"/></svg>
<svg style="position:absolute;left:85px;top:389px;" width="16" height="16" viewBox="0 0 16 16" fill="none" stroke="#CED0D6" stroke-width="1" stroke-linecap="round" stroke-linejoin="round"><path d="M1.5 3 a1 1 0 0 1 1-1 h3.5 l1.5 1.5 h6 a1 1 0 0 1 1 1 v7.5 a1 1 0 0 1 -1 1 h-11 a1 1 0 0 1 -1-1 z" fill="#3C3E43" stroke="#CED0D6"/></svg>
<div style="position:absolute;left:93px;top:396px;width:7px;height:7px;border:1.3px solid #548AF7;border-radius:2px;background:#1F2536;box-sizing:border-box"></div>
<div class="t" style="left:104px;top:388px;color:#DFE1E5">day11</div>
<svg style="position:absolute;left:66px;top:416px;stroke:#9A9DA3;stroke-width:1.15" width="10" height="7" viewBox="0 0 10 7" fill="none" stroke="#CED0D6" stroke-width="1" stroke-linecap="round" stroke-linejoin="round"><path d="M1 1.5 L5 5.5 L9 1.5"/></svg>
<svg style="position:absolute;left:85px;top:411px;" width="16" height="16" viewBox="0 0 16 16" fill="none" stroke="#CED0D6" stroke-width="1" stroke-linecap="round" stroke-linejoin="round"><path d="M1.5 3 a1 1 0 0 1 1-1 h3.5 l1.5 1.5 h6 a1 1 0 0 1 1 1 v7.5 a1 1 0 0 1 -1 1 h-11 a1 1 0 0 1 -1-1 z" fill="#3C3E43" stroke="#CED0D6"/></svg>
<div style="position:absolute;left:93px;top:418px;width:7px;height:7px;border:1.3px solid #548AF7;border-radius:2px;background:#1F2536;box-sizing:border-box"></div>
<div class="t" style="left:104px;top:410px;color:#DFE1E5">day12</div>
<svg style="position:absolute;left:104px;top:425px" width="36" height="4"><path d="M0 2 q1.5 -2 3 0 t3 0 t3 0 t3 0 t3 0 t3 0 t3 0 t3 0 t3 0 t3 0 t3 0 t3 0 t3 0" stroke="#E05555" fill="none" stroke-width="1"/></svg>
<svg style="position:absolute;left:85px;top:438px;stroke:#9A9DA3;stroke-width:1.15" width="10" height="7" viewBox="0 0 10 7" fill="none" stroke="#CED0D6" stroke-width="1" stroke-linecap="round" stroke-linejoin="round"><path d="M1 1.5 L5 5.5 L9 1.5"/></svg>
<svg style="position:absolute;left:104px;top:433px;" width="16" height="16" viewBox="0 0 16 16" fill="none" stroke="#CED0D6" stroke-width="1" stroke-linecap="round" stroke-linejoin="round"><path d="M1.5 3 a1 1 0 0 1 1-1 h3.5 l1.5 1.5 h6 a1 1 0 0 1 1 1 v7.5 a1 1 0 0 1 -1 1 h-11 a1 1 0 0 1 -1-1 z" fill="#25324D" stroke="#548AF7"/></svg>
<div class="t" style="left:123px;top:432px;color:#DFE1E5">src</div>
<svg style="position:absolute;left:123px;top:447px" width="21" height="4"><path d="M0 2 q1.5 -2 3 0 t3 0 t3 0 t3 0 t3 0 t3 0 t3 0 t3 0" stroke="#E05555" fill="none" stroke-width="1"/></svg>
<svg style="position:absolute;left:104px;top:460px;stroke:#9A9DA3;stroke-width:1.15" width="10" height="7" viewBox="0 0 10 7" fill="none" stroke="#CED0D6" stroke-width="1" stroke-linecap="round" stroke-linejoin="round"><path d="M1 1.5 L5 5.5 L9 1.5"/></svg>
<svg style="position:absolute;left:123px;top:455px;" width="16" height="16" viewBox="0 0 16 16" fill="none" stroke="#CED0D6" stroke-width="1" stroke-linecap="round" stroke-linejoin="round"><path d="M1.5 3 a1 1 0 0 1 1-1 h3.5 l1.5 1.5 h6 a1 1 0 0 1 1 1 v7.5 a1 1 0 0 1 -1 1 h-11 a1 1 0 0 1 -1-1 z" fill="#3C3E43" stroke="#CED0D6"/></svg>
<svg style="position:absolute;left:123px;top:455px;" width="16" height="16" viewBox="0 0 16 16" fill="none" stroke="#CED0D6" stroke-width="1" stroke-linecap="round" stroke-linejoin="round"><circle cx="6" cy="8.5" r="1.5"/></svg>
<div class="t" style="left:142px;top:454px;color:#DFE1E5">com</div>
<svg style="position:absolute;left:142px;top:469px" width="21" height="4"><path d="M0 2 q1.5 -2 3 0 t3 0 t3 0 t3 0 t3 0 t3 0 t3 0 t3 0" stroke="#E05555" fill="none" stroke-width="1"/></svg>
<svg style="position:absolute;left:123px;top:482px;stroke:#9A9DA3;stroke-width:1.15" width="10" height="7" viewBox="0 0 10 7" fill="none" stroke="#CED0D6" stroke-width="1" stroke-linecap="round" stroke-linejoin="round"><path d="M1 1.5 L5 5.5 L9 1.5"/></svg>
<svg style="position:absolute;left:142px;top:477px;" width="16" height="16" viewBox="0 0 16 16" fill="none" stroke="#CED0D6" stroke-width="1" stroke-linecap="round" stroke-linejoin="round"><path d="M1.5 3 a1 1 0 0 1 1-1 h3.5 l1.5 1.5 h6 a1 1 0 0 1 1 1 v7.5 a1 1 0 0 1 -1 1 h-11 a1 1 0 0 1 -1-1 z" fill="#3C3E43" stroke="#CED0D6"/></svg>
<svg style="position:absolute;left:142px;top:477px;" width="16" height="16" viewBox="0 0 16 16" fill="none" stroke="#CED0D6" stroke-width="1" stroke-linecap="round" stroke-linejoin="round"><circle cx="6" cy="8.5" r="1.5"/></svg>
<div class="t" style="left:161px;top:476px;color:#DFE1E5">g</div>
<svg style="position:absolute;left:161px;top:491px" width="7" height="4"><path d="M0 2 q1.5 -2 3 0 t3 0 t3 0" stroke="#E05555" fill="none" stroke-width="1"/></svg>
<svg style="position:absolute;left:144px;top:502px;stroke:#9A9DA3;stroke-width:1.15" width="7" height="10" viewBox="0 0 7 10" fill="none" stroke="#CED0D6" stroke-width="1" stroke-linecap="round" stroke-linejoin="round"><path d="M1.5 1 L5.5 5 L1.5 9"/></svg>
<svg style="position:absolute;left:161px;top:499px;" width="16" height="16" viewBox="0 0 16 16" fill="none" stroke="#CED0D6" stroke-width="1" stroke-linecap="round" stroke-linejoin="round"><path d="M1.5 3 a1 1 0 0 1 1-1 h3.5 l1.5 1.5 h6 a1 1 0 0 1 1 1 v7.5 a1 1 0 0 1 -1 1 h-11 a1 1 0 0 1 -1-1 z" fill="#3C3E43" stroke="#CED0D6"/></svg>
<svg style="position:absolute;left:161px;top:499px;" width="16" height="16" viewBox="0 0 16 16" fill="none" stroke="#CED0D6" stroke-width="1" stroke-linecap="round" stroke-linejoin="round"><circle cx="6" cy="8.5" r="1.5"/></svg>
<svg style="position:absolute;left:144px;top:524px;stroke:#9A9DA3;stroke-width:1.15" width="7" height="10" viewBox="0 0 7 10" fill="none" stroke="#CED0D6" stroke-width="1" stroke-linecap="round" stroke-linejoin="round"><path d="M1.5 1 L5.5 5 L1.5 9"/></svg>
<svg style="position:absolute;left:161px;top:521px;" width="16" height="16" viewBox="0 0 16 16" fill="none" stroke="#CED0D6" stroke-width="1" stroke-linecap="round" stroke-linejoin="round"><path d="M1.5 3 a1 1 0 0 1 1-1 h3.5 l1.5 1.5 h6 a1 1 0 0 1 1 1 v7.5 a1 1 0 0 1 -1 1 h-11 a1 1 0 0 1 -1-1 z" fill="#3C3E43" stroke="#CED0D6"/></svg>
<svg style="position:absolute;left:161px;top:521px;" width="16" height="16" viewBox="0 0 16 16" fill="none" stroke="#CED0D6" stroke-width="1" stroke-linecap="round" stroke-linejoin="round"><circle cx="6" cy="8.5" r="1.5"/></svg>
<svg style="position:absolute;left:144px;top:546px;stroke:#9A9DA3;stroke-width:1.15" width="7" height="10" viewBox="0 0 7 10" fill="none" stroke="#CED0D6" stroke-width="1" stroke-linecap="round" stroke-linejoin="round"><path d="M1.5 1 L5.5 5 L1.5 9"/></svg>
<svg style="position:absolute;left:161px;top:543px;" width="16" height="16" viewBox="0 0 16 16" fill="none" stroke="#CED0D6" stroke-width="1" stroke-linecap="round" stroke-linejoin="round"><path d="M1.5 3 a1 1 0 0 1 1-1 h3.5 l1.5 1.5 h6 a1 1 0 0 1 1 1 v7.5 a1 1 0 0 1 -1 1 h-11 a1 1 0 0 1 -1-1 z" fill="#3C3E43" stroke="#CED0D6"/></svg>
<svg style="position:absolute;left:161px;top:543px;" width="16" height="16" viewBox="0 0 16 16" fill="none" stroke="#CED0D6" stroke-width="1" stroke-linecap="round" stroke-linejoin="round"><circle cx="6" cy="8.5" r="1.5"/></svg>
<svg style="position:absolute;left:144px;top:568px;stroke:#9A9DA3;stroke-width:1.15" width="7" height="10" viewBox="0 0 7 10" fill="none" stroke="#CED0D6" stroke-width="1" stroke-linecap="round" stroke-linejoin="round"><path d="M1.5 1 L5.5 5 L1.5 9"/></svg>
<svg style="position:absolute;left:161px;top:565px;" width="16" height="16" viewBox="0 0 16 16" fill="none" stroke="#CED0D6" stroke-width="1" stroke-linecap="round" stroke-linejoin="round"><path d="M1.5 3 a1 1 0 0 1 1-1 h3.5 l1.5 1.5 h6 a1 1 0 0 1 1 1 v7.5 a1 1 0 0 1 -1 1 h-11 a1 1 0 0 1 -1-1 z" fill="#3C3E43" stroke="#CED0D6"/></svg>
<svg style="position:absolute;left:161px;top:565px;" width="16" height="16" viewBox="0 0 16 16" fill="none" stroke="#CED0D6" stroke-width="1" stroke-linecap="round" stroke-linejoin="round"><circle cx="6" cy="8.5" r="1.5"/></svg>
<svg style="position:absolute;left:144px;top:590px;stroke:#9A9DA3;stroke-width:1.15" width="7" height="10" viewBox="0 0 7 10" fill="none" stroke="#CED0D6" stroke-width="1" stroke-linecap="round" stroke-linejoin="round"><path d="M1.5 1 L5.5 5 L1.5 9"/></svg>
<svg style="position:absolute;left:161px;top:587px;" width="16" height="16" viewBox="0 0 16 16" fill="none" stroke="#CED0D6" stroke-width="1" stroke-linecap="round" stroke-linejoin="round"><path d="M1.5 3 a1 1 0 0 1 1-1 h3.5 l1.5 1.5 h6 a1 1 0 0 1 1 1 v7.5 a1 1 0 0 1 -1 1 h-11 a1 1 0 0 1 -1-1 z" fill="#3C3E43" stroke="#CED0D6"/></svg>
<svg style="position:absolute;left:161px;top:587px;" width="16" height="16" viewBox="0 0 16 16" fill="none" stroke="#CED0D6" stroke-width="1" stroke-linecap="round" stroke-linejoin="round"><circle cx="6" cy="8.5" r="1.5"/></svg>
<svg style="position:absolute;left:142px;top:614px;stroke:#9A9DA3;stroke-width:1.15" width="10" height="7" viewBox="0 0 10 7" fill="none" stroke="#CED0D6" stroke-width="1" stroke-linecap="round" stroke-linejoin="round"><path d="M1 1.5 L5 5.5 L9 1.5"/></svg>
<svg style="position:absolute;left:161px;top:609px;" width="16" height="16" viewBox="0 0 16 16" fill="none" stroke="#CED0D6" stroke-width="1" stroke-linecap="round" stroke-linejoin="round"><path d="M1.5 3 a1 1 0 0 1 1-1 h3.5 l1.5 1.5 h6 a1 1 0 0 1 1 1 v7.5 a1 1 0 0 1 -1 1 h-11 a1 1 0 0 1 -1-1 z" fill="#3C3E43" stroke="#CED0D6"/></svg>
<svg style="position:absolute;left:161px;top:609px;" width="16" height="16" viewBox="0 0 16 16" fill="none" stroke="#CED0D6" stroke-width="1" stroke-linecap="round" stroke-linejoin="round"><circle cx="6" cy="8.5" r="1.5"/></svg>
<svg style="position:absolute;left:144px;top:700px;stroke:#9A9DA3;stroke-width:1.15" width="7" height="10" viewBox="0 0 7 10" fill="none" stroke="#CED0D6" stroke-width="1" stroke-linecap="round" stroke-linejoin="round"><path d="M1.5 1 L5.5 5 L1.5 9"/></svg>
<svg style="position:absolute;left:161px;top:697px;" width="16" height="16" viewBox="0 0 16 16" fill="none" stroke="#CED0D6" stroke-width="1" stroke-linecap="round" stroke-linejoin="round"><path d="M1.5 3 a1 1 0 0 1 1-1 h3.5 l1.5 1.5 h6 a1 1 0 0 1 1 1 v7.5 a1 1 0 0 1 -1 1 h-11 a1 1 0 0 1 -1-1 z" fill="#3C3E43" stroke="#CED0D6"/></svg>
<svg style="position:absolute;left:161px;top:697px;" width="16" height="16" viewBox="0 0 16 16" fill="none" stroke="#CED0D6" stroke-width="1" stroke-linecap="round" stroke-linejoin="round"><circle cx="6" cy="8.5" r="1.5"/></svg>
<svg style="position:absolute;left:144px;top:722px;stroke:#9A9DA3;stroke-width:1.15" width="7" height="10" viewBox="0 0 7 10" fill="none" stroke="#CED0D6" stroke-width="1" stroke-linecap="round" stroke-linejoin="round"><path d="M1.5 1 L5.5 5 L1.5 9"/></svg>
<svg style="position:absolute;left:161px;top:719px;" width="16" height="16" viewBox="0 0 16 16" fill="none" stroke="#CED0D6" stroke-width="1" stroke-linecap="round" stroke-linejoin="round"><path d="M1.5 3 a1 1 0 0 1 1-1 h3.5 l1.5 1.5 h6 a1 1 0 0 1 1 1 v7.5 a1 1 0 0 1 -1 1 h-11 a1 1 0 0 1 -1-1 z" fill="#3C3E43" stroke="#CED0D6"/></svg>
<svg style="position:absolute;left:161px;top:719px;" width="16" height="16" viewBox="0 0 16 16" fill="none" stroke="#CED0D6" stroke-width="1" stroke-linecap="round" stroke-linejoin="round"><circle cx="6" cy="8.5" r="1.5"/></svg>
<svg style="position:absolute;left:144px;top:744px;stroke:#9A9DA3;stroke-width:1.15" width="7" height="10" viewBox="0 0 7 10" fill="none" stroke="#CED0D6" stroke-width="1" stroke-linecap="round" stroke-linejoin="round"><path d="M1.5 1 L5.5 5 L1.5 9"/></svg>
<svg style="position:absolute;left:161px;top:741px;" width="16" height="16" viewBox="0 0 16 16" fill="none" stroke="#CED0D6" stroke-width="1" stroke-linecap="round" stroke-linejoin="round"><path d="M1.5 3 a1 1 0 0 1 1-1 h3.5 l1.5 1.5 h6 a1 1 0 0 1 1 1 v7.5 a1 1 0 0 1 -1 1 h-11 a1 1 0 0 1 -1-1 z" fill="#3C3E43" stroke="#CED0D6"/></svg>
<svg style="position:absolute;left:161px;top:741px;" width="16" height="16" viewBox="0 0 16 16" fill="none" stroke="#CED0D6" stroke-width="1" stroke-linecap="round" stroke-linejoin="round"><circle cx="6" cy="8.5" r="1.5"/></svg>
<svg style="position:absolute;left:66px;top:768px;stroke:#9A9DA3;stroke-width:1.15" width="10" height="7" viewBox="0 0 10 7" fill="none" stroke="#CED0D6" stroke-width="1" stroke-linecap="round" stroke-linejoin="round"><path d="M1 1.5 L5 5.5 L9 1.5"/></svg>
<svg style="position:absolute;left:85px;top:763px;" width="16" height="16" viewBox="0 0 16 16" fill="none" stroke="#CED0D6" stroke-width="1" stroke-linecap="round" stroke-linejoin="round"><path d="M1.5 3 a1 1 0 0 1 1-1 h3.5 l1.5 1.5 h6 a1 1 0 0 1 1 1 v7.5 a1 1 0 0 1 -1 1 h-11 a1 1 0 0 1 -1-1 z" fill="#3C3E43" stroke="#CED0D6"/></svg>
<div class="t" style="left:104px;top:762px;color:#DFE1E5">lib</div>
<div style="position:absolute;left:104px;top:786px;width:14px;height:14px;border:1px solid #548AF7;border-radius:2px;background:#25324D;box-sizing:border-box"></div>
<svg style="position:absolute;left:104px;top:786px" width="14" height="14"><g fill="#548AF7"><rect x="6" y="3" width="2" height="2"/><rect x="8" y="5" width="2" height="2"/><rect x="6" y="7" width="2" height="2"/><rect x="8" y="9" width="2" height="2"/></g></svg>
<div class="t" style="left:123px;top:784px;color:#868A91">jol-core</div>
<svg style="position:absolute;left:68px;top:810px;stroke:#9A9DA3;stroke-width:1.15" width="7" height="10" viewBox="0 0 7 10" fill="none" stroke="#CED0D6" stroke-width="1" stroke-linecap="round" stroke-linejoin="round"><path d="M1.5 1 L5.5 5 L1.5 9"/></svg>
<svg style="position:absolute;left:85px;top:807px;" width="16" height="16" viewBox="0 0 16 16" fill="none" stroke="#CED0D6" stroke-width="1" stroke-linecap="round" stroke-linejoin="round"><path d="M1.5 3 a1 1 0 0 1 1-1 h3.5 l1.5 1.5 h6 a1 1 0 0 1 1 1 v7.5 a1 1 0 0 1 -1 1 h-11 a1 1 0 0 1 -1-1 z" fill="#45322A" stroke="#E08855"/></svg>
<div class="t" style="left:104px;top:806px;color:#E08855">out</div>
<svg style="position:absolute;left:85px;top:829px;" width="16" height="16" viewBox="0 0 16 16" fill="none" stroke="#CED0D6" stroke-width="1" stroke-linecap="round" stroke-linejoin="round"><circle cx="8" cy="8" r="6.5"/><path d="M3.5 12.5 L12.5 3.5"/></svg>
<div class="t" style="left:104px;top:828px;color:#DFE1E5">.gitignore</div>
<svg style="position:absolute;left:49px;top:854px;stroke:#9A9DA3;stroke-width:1.15" width="7" height="10" viewBox="0 0 7 10" fill="none" stroke="#CED0D6" stroke-width="1" stroke-linecap="round" stroke-linejoin="round"><path d="M1.5 1 L5.5 5 L1.5 9"/></svg>
<svg style="position:absolute;left:66px;top:851px;" width="16" height="16" viewBox="0 0 16 16" fill="none" stroke="#CED0D6" stroke-width="1" stroke-linecap="round" stroke-linejoin="round"><path d="M1.5 14.5 h13 M2.5 14.5 v-9 h3 v9 M5.5 14.5 v-12 h3 v12 M8.5 14.5 v-7 h4 v7"/></svg>
<div class="t" style="left:85px;top:850px;color:#DFE1E5">外部库</div>
<svg style="position:absolute;left:49px;top:876px;stroke:#9A9DA3;stroke-width:1.15" width="7" height="10" viewBox="0 0 7 10" fill="none" stroke="#CED0D6" stroke-width="1" stroke-linecap="round" stroke-linejoin="round"><path d="M1.5 1 L5.5 5 L1.5 9"/></svg>
<svg style="position:absolute;left:66px;top:873px;" width="16" height="16" viewBox="0 0 16 16" fill="none" stroke="#CED0D6" stroke-width="1" stroke-linecap="round" stroke-linejoin="round"><path d="M1.5 4.5 h6 M1.5 7.5 h7 M1.5 10.5 h11 M1.5 13.5 h9"/></svg>
<div style="position:absolute;left:75px;top:873px;width:7px;height:7px;border-radius:4px;background:#548AF7"></div>
<svg style="position:absolute;left:75px;top:873px;stroke:#fff;stroke-width:.9" width="7" height="7" viewBox="0 0 7 7" fill="none" stroke="#CED0D6" stroke-width="1" stroke-linecap="round" stroke-linejoin="round"><path d="M3.5 1.5 v2 l1.3 1"/></svg>
<div class="t" style="left:85px;top:872px;color:#DFE1E5">临时文件和控制台</div>
<div style="position:absolute;left:34px;top:999px;width:134px;height:7px;background:#56585C;border-radius:0"></div>
<div style="position:absolute;left:362px;top:95px;width:1525px;height:1px;background:#393B40"></div>
<svg style="position:absolute;left:368px;top:73px;stroke:#548AF7" width="15" height="15" viewBox="0 0 15 15" fill="none" stroke="#CED0D6" stroke-width="1" stroke-linecap="round" stroke-linejoin="round"><circle cx="7.5" cy="7.5" r="6.5"/><path d="M10 5.2 a3.3 3.3 0 1 0 0 4.6"/></svg>
<div class="t" style="left:388px;top:71px;color:#6CB26F;font-size:12.4px">Person.java</div>
<div style="position:absolute;left:460px;top:78px;width:6px;height:6px;border-radius:3px;background:#548AF7"></div>
<svg style="position:absolute;left:478px;top:73px;stroke:#548AF7" width="15" height="15" viewBox="0 0 15 15" fill="none" stroke="#CED0D6" stroke-width="1" stroke-linecap="round" stroke-linejoin="round"><circle cx="7.5" cy="7.5" r="6.5"/><path d="M10 5.2 a3.3 3.3 0 1 0 0 4.6"/></svg>
<div class="t" style="left:498px;top:71px;color:#6CB26F;font-size:12.4px">Student.java</div>
<svg style="position:absolute;left:593px;top:73px;stroke:#548AF7" width="15" height="15" viewBox="0 0 15 15" fill="none" stroke="#CED0D6" stroke-width="1" stroke-linecap="round" stroke-linejoin="round"><circle cx="7.5" cy="7.5" r="6.5"/><path d="M10 5.2 a3.3 3.3 0 1 0 0 4.6"/></svg>
<svg style="position:absolute;left:599px;top:70px;stroke:#5FB865" width="9" height="10" viewBox="0 0 9 10" fill="none" stroke="#CED0D6" stroke-width="1" stroke-linecap="round" stroke-linejoin="round"><path d="M1.5 1 L8 5 L1.5 9 Z" fill="#1E1F22"/></svg>
<div class="t" style="left:613px;top:71px;color:#6CB26F;font-size:12.4px">Test.java</div>
<svg style="position:absolute;left:613px;top:86px" width="51" height="4"><path d="M0 2 q1.5 -2 3 0 t3 0 t3 0 t3 0 t3 0 t3 0 t3 0 t3 0 t3 0 t3 0 t3 0 t3 0 t3 0 t3 0 t3 0 t3 0 t3 0" stroke="#E05555" fill="none" stroke-width="1"/></svg>
<div style="position:absolute;left:670px;top:78px;width:6px;height:6px;border-radius:3px;background:#548AF7"></div>
<div style="position:absolute;left:588px;top:93px;width:96px;height:3px;background:#6F737A;border-radius:2px"></div>
<div style="position:absolute;left:1867px;top:73px;width:2px;height:3px;background:#CED0D6;border-radius:1px"></div>
<div style="position:absolute;left:1867px;top:79px;width:2px;height:3px;background:#CED0D6;border-radius:1px"></div>
<div style="position:absolute;left:1867px;top:85px;width:2px;height:3px;background:#CED0D6;border-radius:1px"></div>
<div style="position:absolute;left:417px;top:96px;width:1px;height:888px;background:#2B2D30"></div>
<div class="m" style="left:372px;top:97px;width:14px;text-align:right;color:#4B5059;font-weight:normal">1</div>
<div class="m" style="left:372px;top:117px;width:14px;text-align:right;color:#4B5059;font-weight:normal">2</div>
<div class="m" style="left:372px;top:137px;width:14px;text-align:right;color:#4B5059;font-weight:normal">3</div>
<div style="position:absolute;left:418px;top:136px;width:1359px;height:20px;background:#2A2124"></div>
<div style="position:absolute;left:418px;top:350px;width:1359px;height:40px;background:#2A2124"></div>
<div style="position:absolute;left:418px;top:431px;width:1359px;height:20px;background:#26282D"></div>
<div style="position:absolute;left:1380px;top:96px;width:1px;height:888px;background:#313236"></div>
<div style="position:absolute;left:362px;top:984px;width:1525px;height:1px;background:#313236"></div>
<div class="m" style="left:420px;top:97px;color:#BCBEC4;"><span style="color:#CF8E6D">package </span><span style="color:#BCBEC4">com.github.demo6;</span></div>
<div class="m" style="left:420px;top:137px;color:#BCBEC4;"><span style="color:#CF8E6D">import </span><span style="color:#BCBEC4">org.</span><span style="color:#F75464">openjdk</span><span style="color:#BCBEC4">.jol.info.ClassLayout;</span></div>
<div class="t" style="left:754px;top:136px;color:#F75464;font-size:12px;-webkit-text-stroke:0">无法解析符号<span style="font-family:'Liberation Mono',monospace;font-size:11.6px;font-weight:bold;margin-left:9px;-webkit-text-stroke:0">&#x27;openjdk&#x27;.</span></div>
<div class="m" style="left:420px;top:177px;color:#BCBEC4;"><span style="color:#CF8E6D">public class </span><span style="color:#BCBEC4">Test </span><span style="color:#E8BA36">{</span></div>
<div class="t" style="left:585px;top:176px;color:#868A91;font-size:12px;-webkit-text-stroke:0">新 *</div>
<div class="m" style="left:420px;top:212px;color:#BCBEC4;"><span style="color:#CF8E6D">    public static void </span><span style="color:#56A8F5">main</span><span style="color:#E8BA36">(</span><span style="color:#BCBEC4">String</span><span style="color:#E8BA36">[]</span><span style="color:#BCBEC4"> args</span><span style="color:#E8BA36">)</span><span style="color:#BCBEC4"> </span><span style="color:#54A857">{</span></div>
<div class="t" style="left:785px;top:211px;color:#868A91;font-size:12px;-webkit-text-stroke:0">新 *</div>
<div class="m" style="left:420px;top:232px;color:#BCBEC4;"><span style="color:#BCBEC4">        Student stu = </span><span style="color:#CF8E6D">new </span><span style="color:#BCBEC4">Student</span><span style="color:#E8BA36">(</span></div>
<div style="position:absolute;left:695px;top:233px;height:16px;line-height:16px;padding:0 4px;border-radius:4px;background:#2E3034;color:#868A91;font-size:13px;white-space:nowrap">name:</div>
<div class="m" style="left:742px;top:232px;color:#BCBEC4;"><span style="color:#6AAB73">&quot;张三&quot;</span><span style="color:#BCBEC4">,</span></div>
<div style="position:absolute;left:803px;top:233px;height:16px;line-height:16px;padding:0 4px;border-radius:4px;background:#2E3034;color:#868A91;font-size:13px;white-space:nowrap">age:</div>
<div class="m" style="left:840px;top:232px;color:#BCBEC4;"><span style="color:#2AACB8">18</span><span style="color:#E8BA36">)</span><span style="color:#BCBEC4">;</span></div>
<div class="m" style="left:420px;top:252px;color:#BCBEC4;"><span style="color:#BCBEC4">        System.</span><span style="color:#C77DBB">out</span><span style="color:#BCBEC4">.println</span><span style="color:#E8BA36">(</span><span style="color:#6AAB73">&quot;stu = &quot;</span><span style="color:#BCBEC4"> + stu</span><span style="color:#E8BA36">)</span><span style="color:#BCBEC4">;</span></div>
<div class="m" style="left:420px;top:292px;color:#BCBEC4;"><span style="color:#BCBEC4">        stu.show</span><span style="color:#E8BA36">()</span><span style="color:#BCBEC4">;</span></div>
<div class="m" style="left:420px;top:332px;color:#BCBEC4;"><span style="color:#DE6479">        // </span><span style="color:#DE6479;font-weight:normal;letter-spacing:.9px">将对象在内存中的结构打印出来</span></div>
<div class="m" style="left:420px;top:352px;color:#BCBEC4;"><span style="color:#F75464">        ClassLayout</span><span style="color:#BCBEC4"> classLayout = </span><span style="color:#F75464">ClassLayout</span><span style="color:#BCBEC4">.parseInstance</span><span style="color:#E8BA36">(</span><span style="color:#BCBEC4">stu</span><span style="color:#E8BA36">)</span><span style="color:#BCBEC4">;</span></div>
<div class="t" style="left:954px;top:351px;color:#F75464;font-size:12px;-webkit-text-stroke:0">无法解析符号<span style="font-family:'Liberation Mono',monospace;font-size:11.6px;font-weight:bold;margin-left:9px;-webkit-text-stroke:0">&#x27;ClassLayout&#x27;.</span></div>
<div class="t" style="left:1145px;top:351px;color:#F75464;font-size:12px;-webkit-text-stroke:0">无法解析符号<span style="font-family:'Liberation Mono',monospace;font-size:11.6px;font-weight:bold;margin-left:9px;-webkit-text-stroke:0">&#x27;ClassLayout&#x27;.</span></div>
<div class="m" style="left:420px;top:372px;color:#BCBEC4;"><span style="color:#BCBEC4">        System.</span><span style="color:#C77DBB">out</span><span style="color:#BCBEC4">.println</span><span style="color:#E8BA36">(</span><span style="color:#BCBEC4">classLayout.</span><span style="color:#F75464">toPrintable</span><span style="color:#54A857">()</span><span style="color:#E8BA36">)</span><span style="color:#BCBEC4">;</span></div>
<div class="t" style="left:866px;top:371px;color:#F75464;font-size:12px;-webkit-text-stroke:0">无法解析方法<span style="font-family:'Liberation Mono',monospace;font-size:11.6px;font-weight:bold;margin-left:9px;-webkit-text-stroke:0">&#x27;toPrintable()&#x27;.</span></div>
<div class="m" style="left:420px;top:432px;color:#BCBEC4;font-style:italic"><span style="color:#5C5F66">        14 minutes ago • Uncommitted changes</span></div>
<svg style="position:absolute;left:1681px;top:102px;" width="16" height="14" viewBox="0 0 16 14" fill="none" stroke="#CED0D6" stroke-width="1" stroke-linecap="round" stroke-linejoin="round"><path d="M1.5 7 c1.8-3 4-4.5 6.5-4.5 s4.7 1.5 6.5 4.5 c-1.8 3-4 4.5-6.5 4.5 s-4.7-1.5-6.5-4.5 z"/><circle cx="8" cy="7" r="2"/><path d="M2.5 12.5 L13.5 1.5"/></svg>
<div style="position:absolute;left:1710px;top:103px;width:12px;height:12px;border-radius:6px;background:#E55765"></div>
<div style="position:absolute;left:1715px;top:105px;width:2px;height:5px;background:#fff"></div>
<div style="position:absolute;left:1715px;top:111px;width:2px;height:2px;background:#fff"></div>
<div class="t" style="left:1725px;top:100px;color:#CED0D6;font-weight:bold">4</div>
<svg style="position:absolute;left:1743px;top:105px;" width="10" height="7" viewBox="0 0 10 7" fill="none" stroke="#CED0D6" stroke-width="1" stroke-linecap="round" stroke-linejoin="round"><path d="M1 5.5 L5 1.5 L9 5.5"/></svg>
<svg style="position:absolute;left:1764px;top:105px;" width="10" height="7" viewBox="0 0 10 7" fill="none" stroke="#CED0D6" stroke-width="1" stroke-linecap="round" stroke-linejoin="round"><path d="M1 1.5 L5 5.5 L9 1.5"/></svg>
<div style="position:absolute;left:1767px;top:162px;width:10px;height:2px;background:#E55765"></div>
<div style="position:absolute;left:1767px;top:202px;width:10px;height:2px;background:#5FB865"></div>
<div style="position:absolute;left:1767px;top:377px;width:10px;height:2px;background:#E55765"></div>
<div style="position:absolute;left:1767px;top:397px;width:10px;height:2px;background:#E55765"></div>
<div style="position:absolute;left:1777px;top:96px;width:109px;height:176px;background:#2D2E32;border-radius:0 0 4px 4px"></div>
<div style="position:absolute;left:1777px;top:162px;width:109px;height:4px;background:#35528A"></div>
<div style="position:absolute;left:1777px;top:97px;width:7px;height:2px;background:#7E5E4E"></div>
<div style="position:absolute;left:1785px;top:97px;width:16px;height:2px;background:#6B6E73"></div>
<div style="position:absolute;left:1777px;top:105px;width:6px;height:2px;background:#7E5E4E"></div>
<div style="position:absolute;left:1784px;top:105px;width:4px;height:2px;background:#6B6E73"></div>
<div style="position:absolute;left:1788px;top:105px;width:8px;height:3px;background:#D9536A"></div>
<div style="position:absolute;left:1796px;top:105px;width:8px;height:3px;background:#C77D8A"></div>
<div style="position:absolute;left:1804px;top:105px;width:14px;height:2px;background:#6B6E73"></div>
<div style="position:absolute;left:1779px;top:112px;font:bold 10px 'Liberation Mono',monospace;color:#5FB84C;line-height:12px;letter-spacing:0">Test</div>
<div style="position:absolute;left:1785px;top:124px;width:8px;height:2px;background:#6B6E73"></div>
<div style="position:absolute;left:1794px;top:124px;width:4px;height:2px;background:#6B6E73"></div>
<div style="position:absolute;left:1800px;top:124px;width:3px;height:2px;background:#7E5E4E"></div>
<div style="position:absolute;left:1804px;top:124px;width:12px;height:2px;background:#6B6E73"></div>
<div style="position:absolute;left:1817px;top:124px;width:4px;height:2px;background:#3B8D8F"></div>
<div style="position:absolute;left:1785px;top:128px;width:8px;height:2px;background:#6B6E73"></div>
<div style="position:absolute;left:1793px;top:128px;width:4px;height:2px;background:#7A5E80"></div>
<div style="position:absolute;left:1797px;top:128px;width:12px;height:2px;background:#6B6E73"></div>
<div style="position:absolute;left:1809px;top:128px;width:5px;height:2px;background:#5E8A5A"></div>
<div style="position:absolute;left:1816px;top:128px;width:5px;height:2px;background:#6B6E73"></div>
<div style="position:absolute;left:1785px;top:135px;width:11px;height:2px;background:#6B6E73"></div>
<div style="position:absolute;left:1796px;top:135px;width:3px;height:2px;background:#8A7A40"></div>
<div style="position:absolute;left:1785px;top:144px;width:17px;height:2px;background:#5E4A55"></div>
<div style="position:absolute;left:1785px;top:148px;width:15px;height:3px;background:#D9536A"></div>
<div style="position:absolute;left:1800px;top:148px;width:10px;height:2px;background:#6B6E73"></div>
<div style="position:absolute;left:1812px;top:148px;width:15px;height:3px;background:#D9536A"></div>
<div style="position:absolute;left:1827px;top:148px;width:20px;height:2px;background:#6B6E73"></div>
<div style="position:absolute;left:1785px;top:153px;width:8px;height:2px;background:#6B6E73"></div>
<div style="position:absolute;left:1793px;top:153px;width:3px;height:2px;background:#7A5E80"></div>
<div style="position:absolute;left:1796px;top:153px;width:15px;height:2px;background:#6B6E73"></div>
<div style="position:absolute;left:1811px;top:153px;width:15px;height:3px;background:#D9536A"></div>
<div style="position:absolute;left:1781px;top:157px;width:1px;height:3px;background:#3E7E44"></div>
<div style="position:absolute;left:168px;top:161px;width:322px;height:900px;background:#2B2D30;border:1px solid #43454A;border-radius:8px;box-sizing:border-box;box-shadow:0 4px 14px rgba(0,0,0,.35)"></div>
<div class="t" style="left:204px;top:170px;color:#DFE1E5">新建(<u>N</u>)</div>
<svg style="position:absolute;left:463px;top:174px;stroke:#A8ADB5" width="7" height="10" viewBox="0 0 7 10" fill="none" stroke="#CED0D6" stroke-width="1" stroke-linecap="round" stroke-linejoin="round"><path d="M1.5 1 L5.5 5 L1.5 9"/></svg>
<div style="position:absolute;left:179px;top:195px;width:299px;height:1px;background:#43454A"></div>
<svg style="position:absolute;left:184px;top:204px;" width="16" height="16" viewBox="0 0 16 16" fill="none" stroke="#CED0D6" stroke-width="1" stroke-linecap="round" stroke-linejoin="round"><circle cx="3.5" cy="4" r="2.2"/><circle cx="3.5" cy="12" r="2.2"/><path d="M5.5 5 L14 11 M5.5 11 L14 5"/></svg>
<div class="t" style="left:204px;top:203px;color:#DFE1E5">剪切(<u>T</u>)</div>
<div class="t" style="left:275px;width:200px;top:203px;text-align:right;color:#868A91">Ctrl+X</div>
<svg style="position:absolute;left:184px;top:228px;" width="16" height="16" viewBox="0 0 16 16" fill="none" stroke="#CED0D6" stroke-width="1" stroke-linecap="round" stroke-linejoin="round"><rect x="2" y="4" width="9.5" height="10.5" rx="1.5"/><path d="M5 1.5 h7.5 a1.5 1.5 0 0 1 1.5 1.5 v8.5 M4.5 7.5 h4.5 M4.5 10 h4.5 M4.5 12.5 h3"/></svg>
<div class="t" style="left:204px;top:227px;color:#DFE1E5">复制(<u>C</u>)</div>
<div class="t" style="left:275px;width:200px;top:227px;text-align:right;color:#868A91">Ctrl+C</div>
<div class="t" style="left:204px;top:251px;color:#DFE1E5">复制路径/引用...</div>
<svg style="position:absolute;left:184px;top:276px;" width="16" height="16" viewBox="0 0 16 16" fill="none" stroke="#CED0D6" stroke-width="1" stroke-linecap="round" stroke-linejoin="round"><rect x="2.5" y="3" width="11" height="12" rx="1.5"/><path d="M5.5 1.5 h5 v2.5 h-5 z M5 7.5 h6 M5 10 h6 M5 12.5 h4"/></svg>
<div class="t" style="left:204px;top:275px;color:#DFE1E5">粘贴(<u>P</u>)</div>
<div class="t" style="left:275px;width:200px;top:275px;text-align:right;color:#868A91">Ctrl+V</div>
<div style="position:absolute;left:179px;top:300px;width:299px;height:1px;background:#43454A"></div>
<div class="t" style="left:204px;top:308px;color:#DFE1E5">查找用法(<u>U</u>)</div>
<div class="t" style="left:275px;width:200px;top:308px;text-align:right;color:#868A91">Alt+F7</div>
<div class="t" style="left:204px;top:332px;color:#DFE1E5">分析(<u>Z</u>)</div>
<svg style="position:absolute;left:463px;top:336px;stroke:#A8ADB5" width="7" height="10" viewBox="0 0 7 10" fill="none" stroke="#CED0D6" stroke-width="1" stroke-linecap="round" stroke-linejoin="round"><path d="M1.5 1 L5.5 5 L1.5 9"/></svg>
<div style="position:absolute;left:179px;top:357px;width:299px;height:1px;background:#43454A"></div>
<div class="t" style="left:204px;top:365px;color:#DFE1E5">重命名(<u>R</u>)...</div>
<div class="t" style="left:275px;width:200px;top:365px;text-align:right;color:#868A91">Shift+F6</div>
<div class="t" style="left:204px;top:389px;color:#DFE1E5">重构(<u>R</u>)</div>
<svg style="position:absolute;left:463px;top:393px;stroke:#A8ADB5" width="7" height="10" viewBox="0 0 7 10" fill="none" stroke="#CED0D6" stroke-width="1" stroke-linecap="round" stroke-linejoin="round"><path d="M1.5 1 L5.5 5 L1.5 9"/></svg>
<div style="position:absolute;left:179px;top:414px;width:299px;height:1px;background:#43454A"></div>
<div class="t" style="left:204px;top:422px;color:#DFE1E5">书签</div>
<svg style="position:absolute;left:463px;top:426px;stroke:#A8ADB5" width="7" height="10" viewBox="0 0 7 10" fill="none" stroke="#CED0D6" stroke-width="1" stroke-linecap="round" stroke-linejoin="round"><path d="M1.5 1 L5.5 5 L1.5 9"/></svg>
<div style="position:absolute;left:179px;top:447px;width:299px;height:1px;background:#43454A"></div>
<div class="t" style="left:204px;top:455px;color:#DFE1E5">删除(<u>D</u>)...</div>
<div class="t" style="left:275px;width:200px;top:455px;text-align:right;color:#868A91">Delete</div>
<div class="t" style="left:204px;top:479px;color:#DFE1E5">重写文件类型</div>
<div class="t" style="left:204px;top:503px;color:#DFE1E5"><u>J</u>avaDocs</div>
<svg style="position:absolute;left:463px;top:507px;stroke:#A8ADB5" width="7" height="10" viewBox="0 0 7 10" fill="none" stroke="#CED0D6" stroke-width="1" stroke-linecap="round" stroke-linejoin="round"><path d="M1.5 1 L5.5 5 L1.5 9"/></svg>
<div style="position:absolute;left:179px;top:528px;width:299px;height:1px;background:#43454A"></div>
<svg style="position:absolute;left:184px;top:537px;stroke:#5FB865;stroke-width:1.3" width="16" height="16" viewBox="0 0 16 16" fill="none" stroke="#CED0D6" stroke-width="1" stroke-linecap="round" stroke-linejoin="round"><path d="M2.5 2 L14 8 L2.5 14 Z"/></svg>
<div class="t" style="left:204px;top:536px;color:#DFE1E5">运行 'jol-core-0.17.jar'(<u>U</u>)</div>
<div class="t" style="left:275px;width:200px;top:536px;text-align:right;color:#868A91">Ctrl+Shift+F10</div>
<svg style="position:absolute;left:184px;top:561px;stroke:#5FB865;stroke-width:1.1" width="16" height="16" viewBox="0 0 16 16" fill="none" stroke="#CED0D6" stroke-width="1" stroke-linecap="round" stroke-linejoin="round"><ellipse cx="8" cy="9.5" rx="4" ry="5"/><path d="M5.5 4.5 a2.5 2.5 0 0 1 5 0"/><path d="M1 6.5 l3 1.5 M15 6.5 l-3 1.5 M1 10 h3 M12 10 h3 M1.5 14.5 l3-2 M14.5 14.5 l-3-2 M8 5 v9"/></svg>
<div class="t" style="left:204px;top:560px;color:#DFE1E5">调试 'jol-core-0.17.jar'(<u>D</u>)</div>
<div class="t" style="left:204px;top:584px;color:#DFE1E5">更多运行/调试</div>
<svg style="position:absolute;left:463px;top:588px;stroke:#A8ADB5" width="7" height="10" viewBox="0 0 7 10" fill="none" stroke="#CED0D6" stroke-width="1" stroke-linecap="round" stroke-linejoin="round"><path d="M1.5 1 L5.5 5 L1.5 9"/></svg>
<div style="position:absolute;left:179px;top:609px;width:299px;height:1px;background:#43454A"></div>
<svg style="position:absolute;left:184px;top:618px;" width="16" height="16" viewBox="0 0 16 16" fill="none" stroke="#CED0D6" stroke-width="1" stroke-linecap="round" stroke-linejoin="round"><rect x="1.5" y="2" width="13" height="12" rx="1.5"/><path d="M8 2 v12"/></svg>
<div class="t" style="left:204px;top:617px;color:#DFE1E5">在右侧拆分部分打开</div>
<div class="t" style="left:275px;width:200px;top:617px;text-align:right;color:#868A91">Shift+Enter</div>
<div class="t" style="left:204px;top:641px;color:#DFE1E5">打开于</div>
<svg style="position:absolute;left:463px;top:645px;stroke:#A8ADB5" width="7" height="10" viewBox="0 0 7 10" fill="none" stroke="#CED0D6" stroke-width="1" stroke-linecap="round" stroke-linejoin="round"><path d="M1.5 1 L5.5 5 L1.5 9"/></svg>
<div style="position:absolute;left:179px;top:666px;width:299px;height:1px;background:#43454A"></div>
<div class="t" style="left:204px;top:674px;color:#DFE1E5">本地历史记录(<u>H</u>)</div>
<svg style="position:absolute;left:463px;top:678px;stroke:#A8ADB5" width="7" height="10" viewBox="0 0 7 10" fill="none" stroke="#CED0D6" stroke-width="1" stroke-linecap="round" stroke-linejoin="round"><path d="M1.5 1 L5.5 5 L1.5 9"/></svg>
<div class="t" style="left:204px;top:698px;color:#DFE1E5">Git(<u>G</u>)</div>
<svg style="position:absolute;left:463px;top:702px;stroke:#A8ADB5" width="7" height="10" viewBox="0 0 7 10" fill="none" stroke="#CED0D6" stroke-width="1" stroke-linecap="round" stroke-linejoin="round"><path d="M1.5 1 L5.5 5 L1.5 9"/></svg>
<svg style="position:absolute;left:184px;top:723px;" width="16" height="16" viewBox="0 0 16 16" fill="none" stroke="#CED0D6" stroke-width="1" stroke-linecap="round" stroke-linejoin="round"><path d="M8 0.8 L15.2 8 L8 15.2 L0.8 8 Z" fill="#E8513A" stroke="none"/><path d="M6 4.5 l4.5 4.5 M7.5 6 v5.5 M9 9 a1 1 0 1 0 .1 0" stroke="#3A1C18" stroke-width="1.3"/></svg>
<div class="t" style="left:204px;top:722px;color:#DFE1E5">GitToolBox</div>
<svg style="position:absolute;left:463px;top:726px;stroke:#A8ADB5" width="7" height="10" viewBox="0 0 7 10" fill="none" stroke="#CED0D6" stroke-width="1" stroke-linecap="round" stroke-linejoin="round"><path d="M1.5 1 L5.5 5 L1.5 9"/></svg>
<div class="t" style="left:204px;top:746px;color:#DFE1E5">修复文件上的 IDE</div>
<svg style="position:absolute;left:184px;top:771px;" width="16" height="16" viewBox="0 0 16 16" fill="none" stroke="#CED0D6" stroke-width="1" stroke-linecap="round" stroke-linejoin="round"><path d="M2.5 8 a5.5 5.5 0 0 1 10 -3"/><path d="M13.5 8 a5.5 5.5 0 0 1 -10 3"/><path d="M1 6.5 l1.5 2 l2 -1.5"/><path d="M15 9.5 l-1.5-2 l-2 1.5"/></svg>
<div class="t" style="left:204px;top:770px;color:#DFE1E5">从磁盘重新加载</div>
<div style="position:absolute;left:179px;top:795px;width:299px;height:1px;background:#43454A"></div>
<svg style="position:absolute;left:184px;top:804px;" width="16" height="16" viewBox="0 0 16 16" fill="none" stroke="#CED0D6" stroke-width="1" stroke-linecap="round" stroke-linejoin="round"><path d="M15 4 h-7 M10.5 1.5 l-2.5 2.5 l2.5 2.5"/><path d="M1 11.5 h7 M5.5 9 l2.5 2.5 l-2.5 2.5"/></svg>
<div class="t" style="left:204px;top:803px;color:#DFE1E5">比较对象...</div>
<div class="t" style="left:275px;width:200px;top:803px;text-align:right;color:#868A91">Ctrl+D</div>
<div class="t" style="left:204px;top:827px;color:#DFE1E5">与编辑器比较文件(<u>M</u>)</div>
<div style="position:absolute;left:179px;top:852px;width:299px;height:1px;background:#43454A"></div>
<div style="position:absolute;left:176px;top:858px;width:306px;height:22px;background:#2E436E;border-radius:4px"></div>
<div class="t" style="left:204px;top:860px;color:#DFE1E5">添加为库...</div>
<svg style="position:absolute;left:184px;top:885px;" width="16" height="16" viewBox="0 0 16 16" fill="none" stroke="#CED0D6" stroke-width="1" stroke-linecap="round" stroke-linejoin="round"><path d="M1.5 2 h13 M1.5 14 h13"/><path d="M4.5 12 v-7 M2.5 7 l2-2 l2 2 M11 12 v-7 M9 7 l2-2 l2 2" stroke="#548AF7"/></svg>
<div class="t" style="left:204px;top:884px;color:#DFE1E5">图表</div>
<svg style="position:absolute;left:463px;top:888px;stroke:#A8ADB5" width="7" height="10" viewBox="0 0 7 10" fill="none" stroke="#CED0D6" stroke-width="1" stroke-linecap="round" stroke-linejoin="round"><path d="M1.5 1 L5.5 5 L1.5 9"/></svg>
<div style="position:absolute;left:179px;top:909px;width:299px;height:1px;background:#43454A"></div>
<svg style="position:absolute;left:184px;top:918px;" width="16" height="16" viewBox="0 0 16 16" fill="none" stroke="#CED0D6" stroke-width="1" stroke-linecap="round" stroke-linejoin="round"><path d="M8 1 L15 8 L8 15 L1 8 Z" fill="#CED0D6" stroke="none"/><path d="M6 5 l3 3 M6.5 6 v5 M9.5 8.5 v2" stroke="#2B2D30" stroke-width="1.2"/></svg>
<div class="t" style="left:204px;top:917px;color:#DFE1E5">Add to .gitignore file (unignore)</div>
<div style="position:absolute;left:179px;top:942px;width:299px;height:1px;background:#43454A"></div>
<svg style="position:absolute;left:184px;top:951px;" width="16" height="16" viewBox="0 0 16 16" fill="none" stroke="#CED0D6" stroke-width="1" stroke-linecap="round" stroke-linejoin="round"><path d="M8 .5 L14.5 4.25 V11.75 L8 15.5 L1.5 11.75 V4.25 Z" fill="#F0455E" stroke="none"/><path d="M4 6.5 a4 4 0 0 0 8 0 l-1.5 1.2 l-2.5-2.2 l-2.5 2.2 z" fill="#fff" stroke="none"/></svg>
<div class="t" style="left:204px;top:950px;color:#DFE1E5">Upload to Apifox</div>
<div class="t" style="left:275px;width:200px;top:950px;text-align:right;color:#868A91">Alt+Shift+E</div>
<svg style="position:absolute;left:184px;top:975px;" width="16" height="16" viewBox="0 0 16 16" fill="none" stroke="#CED0D6" stroke-width="1" stroke-linecap="round" stroke-linejoin="round"><circle cx="8" cy="9" r="6.5" fill="#6BA539" stroke="none"/><circle cx="8" cy="9" r="2.5" fill="#2B2D30" stroke="none"/><path d="M3.5 9 h2 M10.5 9 h2 M8 4.5 v2 M8 11.5 v2" stroke="#2B2D30" stroke-width="1.2"/><path d="M9.5 7.5 l4.5-5.5" stroke="#6B6E73" stroke-width="1.5"/></svg>
<div class="t" style="left:204px;top:974px;color:#DFE1E5">Export OpenAPI (YAML)</div>
<svg style="position:absolute;left:184px;top:999px;" width="16" height="16" viewBox="0 0 16 16" fill="none" stroke="#CED0D6" stroke-width="1" stroke-linecap="round" stroke-linejoin="round"><circle cx="8" cy="9" r="6.5" fill="#6BA539" stroke="none"/><circle cx="8" cy="9" r="2.5" fill="#2B2D30" stroke="none"/><path d="M3.5 9 h2 M10.5 9 h2 M8 4.5 v2 M8 11.5 v2" stroke="#2B2D30" stroke-width="1.2"/><path d="M9.5 7.5 l4.5-5.5" stroke="#6B6E73" stroke-width="1.5"/></svg>
<div class="t" style="left:204px;top:998px;color:#DFE1E5">Export OpenAPI (JSON)</div>
<div class="t" style="left:204px;top:1022px;color:#DFE1E5">Apifox helper</div>
<svg style="position:absolute;left:463px;top:1026px;stroke:#A8ADB5" width="7" height="10" viewBox="0 0 7 10" fill="none" stroke="#CED0D6" stroke-width="1" stroke-linecap="round" stroke-linejoin="round"><path d="M1.5 1 L5.5 5 L1.5 9"/></svg>
<svg style="position:absolute;left:175px;top:857px" width="306" height="25"><rect x="1" y="1" width="304" height="23" fill="none" stroke="#FF0A0A" stroke-width="2" stroke-dasharray="9.5 2.5"/></svg>
<div style="position:absolute;left:1829px;top:833px;width:86px;height:35px;border-radius:9px;background:linear-gradient(#2A3033,#22282A);box-shadow:0 2px 6px rgba(0,0,0,.5)"></div>
<div style="position:absolute;left:1845px;top:866px;width:54px;height:1px;background:linear-gradient(90deg,rgba(60,220,230,0),rgba(60,220,230,.8),rgba(60,220,230,0))"></div>
<div style="position:absolute;left:1841px;top:840px;font-size:17px;line-height:20px;color:#2DD4E6">英</div>
<div style="position:absolute;left:1869px;top:848px;width:3px;height:3px;background:#2DD4E6;border-radius:2px"></div>
<div style="position:absolute;left:1874px;top:842px;font:bold 14px 'Liberation Sans',sans-serif;line-height:16px;color:#2DD4E6">,</div>
<svg style="position:absolute;left:1886px;top:841px;stroke:#2DD4E6;stroke-width:1.5" width="18" height="16" viewBox="0 0 18 16" fill="none" stroke="#CED0D6" stroke-width="1" stroke-linecap="round" stroke-linejoin="round"><path d="M6 1.5 l-4.5 4 l2.5 3 l1.5-1.2 v7.2 h7 v-7.2 l1.5 1.2 l2.5-3 l-4.5-4 a2.5 2.5 0 0 1 -5 0 z"/></svg>
</body></html>
